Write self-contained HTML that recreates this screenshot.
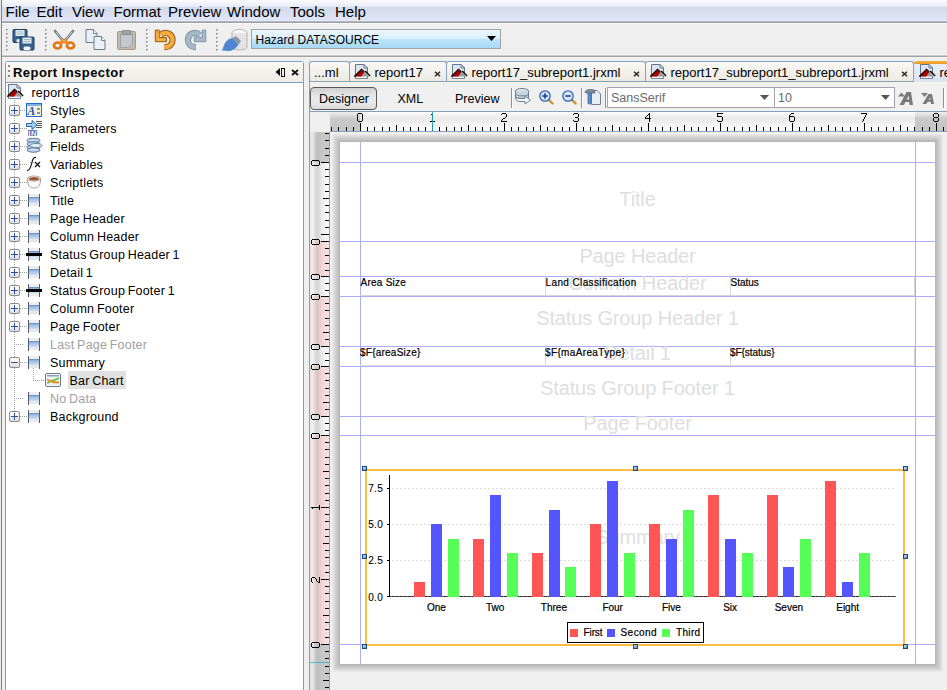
<!DOCTYPE html><html><head><meta charset="utf-8"><style>html,body{margin:0;padding:0;}body{width:947px;height:690px;position:relative;overflow:hidden;background:#efefef;font-family:"Liberation Sans",sans-serif;}</style></head><body><div style="position:absolute;left:0px;top:0px;width:947px;height:21px;background:linear-gradient(#fafbfe 0px,#f1f4fa 3px,#e8ecf7 6.5px,#d4daee 7.5px,#d8deef 12px,#e1e7f7 21px)"></div>
<div style="position:absolute;left:0px;top:21px;width:947px;height:1px;background:#b5bccb"></div>
<div style="position:absolute;left:0px;top:22px;width:947px;height:1px;background:#9d9d9d"></div>
<div style="position:absolute;left:0px;top:23px;width:947px;height:1px;background:#fdfdfd"></div>
<div style="position:absolute;left:0px;top:54px;width:947px;height:1px;background:#f4f4f4"></div>
<div style="position:absolute;left:0px;top:55px;width:947px;height:1px;background:#cacaca"></div>
<div style="position:absolute;left:0px;top:56px;width:947px;height:1px;background:#a2a2a2"></div>
<div style="position:absolute;left:0px;top:57px;width:947px;height:1px;background:#f5f5f5"></div>
<div style="position:absolute;left:1px;top:0px;width:1px;height:690px;background:#828282"></div>
<div style="position:absolute;left:0px;top:0px;width:1px;height:690px;background:#e8e8e8"></div>
<div style="position:absolute;left:5.5px;top:3px;font:normal 15px/17px 'Liberation Sans',sans-serif;color:#000;white-space:nowrap;">File</div>
<div style="position:absolute;left:36.5px;top:3px;font:normal 15px/17px 'Liberation Sans',sans-serif;color:#000;white-space:nowrap;">Edit</div>
<div style="position:absolute;left:72px;top:3px;font:normal 15px/17px 'Liberation Sans',sans-serif;color:#000;white-space:nowrap;">View</div>
<div style="position:absolute;left:113.5px;top:3px;font:normal 15px/17px 'Liberation Sans',sans-serif;color:#000;white-space:nowrap;">Format</div>
<div style="position:absolute;left:168px;top:3px;font:normal 15px/17px 'Liberation Sans',sans-serif;color:#000;white-space:nowrap;">Preview</div>
<div style="position:absolute;left:227px;top:3px;font:normal 15px/17px 'Liberation Sans',sans-serif;color:#000;white-space:nowrap;">Window</div>
<div style="position:absolute;left:290px;top:3px;font:normal 15px/17px 'Liberation Sans',sans-serif;color:#000;white-space:nowrap;">Tools</div>
<div style="position:absolute;left:335px;top:3px;font:normal 15px/17px 'Liberation Sans',sans-serif;color:#000;white-space:nowrap;">Help</div>
<svg style="position:absolute;left:6px;top:29px" width="2" height="24" viewBox="0 0 2 24"><rect x="0" y="0" width="2" height="2" fill="#9a9a9a"/><rect x="1" y="1" width="1" height="1" fill="#fff"/><rect x="0" y="4" width="2" height="2" fill="#9a9a9a"/><rect x="1" y="5" width="1" height="1" fill="#fff"/><rect x="0" y="8" width="2" height="2" fill="#9a9a9a"/><rect x="1" y="9" width="1" height="1" fill="#fff"/><rect x="0" y="12" width="2" height="2" fill="#9a9a9a"/><rect x="1" y="13" width="1" height="1" fill="#fff"/><rect x="0" y="16" width="2" height="2" fill="#9a9a9a"/><rect x="1" y="17" width="1" height="1" fill="#fff"/><rect x="0" y="20" width="2" height="2" fill="#9a9a9a"/><rect x="1" y="21" width="1" height="1" fill="#fff"/></svg>
<svg style="position:absolute;left:45px;top:29px" width="2" height="24" viewBox="0 0 2 24"><rect x="0" y="0" width="2" height="2" fill="#9a9a9a"/><rect x="1" y="1" width="1" height="1" fill="#fff"/><rect x="0" y="4" width="2" height="2" fill="#9a9a9a"/><rect x="1" y="5" width="1" height="1" fill="#fff"/><rect x="0" y="8" width="2" height="2" fill="#9a9a9a"/><rect x="1" y="9" width="1" height="1" fill="#fff"/><rect x="0" y="12" width="2" height="2" fill="#9a9a9a"/><rect x="1" y="13" width="1" height="1" fill="#fff"/><rect x="0" y="16" width="2" height="2" fill="#9a9a9a"/><rect x="1" y="17" width="1" height="1" fill="#fff"/><rect x="0" y="20" width="2" height="2" fill="#9a9a9a"/><rect x="1" y="21" width="1" height="1" fill="#fff"/></svg>
<svg style="position:absolute;left:146px;top:29px" width="2" height="24" viewBox="0 0 2 24"><rect x="0" y="0" width="2" height="2" fill="#9a9a9a"/><rect x="1" y="1" width="1" height="1" fill="#fff"/><rect x="0" y="4" width="2" height="2" fill="#9a9a9a"/><rect x="1" y="5" width="1" height="1" fill="#fff"/><rect x="0" y="8" width="2" height="2" fill="#9a9a9a"/><rect x="1" y="9" width="1" height="1" fill="#fff"/><rect x="0" y="12" width="2" height="2" fill="#9a9a9a"/><rect x="1" y="13" width="1" height="1" fill="#fff"/><rect x="0" y="16" width="2" height="2" fill="#9a9a9a"/><rect x="1" y="17" width="1" height="1" fill="#fff"/><rect x="0" y="20" width="2" height="2" fill="#9a9a9a"/><rect x="1" y="21" width="1" height="1" fill="#fff"/></svg>
<svg style="position:absolute;left:216px;top:29px" width="2" height="24" viewBox="0 0 2 24"><rect x="0" y="0" width="2" height="2" fill="#9a9a9a"/><rect x="1" y="1" width="1" height="1" fill="#fff"/><rect x="0" y="4" width="2" height="2" fill="#9a9a9a"/><rect x="1" y="5" width="1" height="1" fill="#fff"/><rect x="0" y="8" width="2" height="2" fill="#9a9a9a"/><rect x="1" y="9" width="1" height="1" fill="#fff"/><rect x="0" y="12" width="2" height="2" fill="#9a9a9a"/><rect x="1" y="13" width="1" height="1" fill="#fff"/><rect x="0" y="16" width="2" height="2" fill="#9a9a9a"/><rect x="1" y="17" width="1" height="1" fill="#fff"/><rect x="0" y="20" width="2" height="2" fill="#9a9a9a"/><rect x="1" y="21" width="1" height="1" fill="#fff"/></svg>
<svg style="position:absolute;left:12px;top:29px" width="24" height="22" viewBox="0 0 24 22"><g transform="translate(0.5,0)"><path d="M0.5 1.5 Q0.5 0.5 1.5 0.5 H13.5 Q14.5 0.5 14.5 1.5 V12.5 Q14.5 13.5 13.5 13.5 H1.5 Q0.5 13.5 0.5 12.5 Z" fill="#33628f" stroke="#1d3b5c"/><rect x="3" y="1" width="9" height="6" fill="#e2eaf1"/><rect x="4" y="2.5" width="7" height="1" fill="#a9b6c2"/><rect x="4" y="4.5" width="7" height="1" fill="#a9b6c2"/><rect x="4" y="10" width="7" height="3.5" rx="1.5" fill="#f6f8fa"/></g><g transform="translate(7.5,7.5)"><path d="M0.5 1.5 Q0.5 0.5 1.5 0.5 H13.5 Q14.5 0.5 14.5 1.5 V12.5 Q14.5 13.5 13.5 13.5 H1.5 Q0.5 13.5 0.5 12.5 Z" fill="#33628f" stroke="#1d3b5c"/><rect x="3" y="1" width="9" height="6" fill="#e2eaf1"/><rect x="4" y="2.5" width="7" height="1" fill="#a9b6c2"/><rect x="4" y="4.5" width="7" height="1" fill="#a9b6c2"/><rect x="4" y="10" width="7" height="3.5" rx="1.5" fill="#f6f8fa"/></g></svg>
<svg style="position:absolute;left:52px;top:29px" width="24" height="22" viewBox="0 0 24 22"><path d="M3 2 L12 13" stroke="#5f6a74" stroke-width="2.4" stroke-linecap="round"/><path d="M21 2 L12 13" stroke="#5f6a74" stroke-width="2.4" stroke-linecap="round"/><path d="M3.5 2.5 L11.5 12.2 M20.5 2.5 L12.5 12.2" stroke="#e6eaee" stroke-width="0.9"/><ellipse cx="5.5" cy="16.5" rx="3.6" ry="3" fill="none" stroke="#e27512" stroke-width="2.6"/><ellipse cx="18.5" cy="16.5" rx="3.6" ry="3" fill="none" stroke="#e27512" stroke-width="2.6"/><path d="M8 14.5 L12 11 L16 14.5" stroke="#f08a1c" stroke-width="3" fill="none"/><circle cx="12" cy="12" r="1.2" fill="#f6b060"/></svg>
<svg style="position:absolute;left:85px;top:29px" width="22" height="22" viewBox="0 0 22 22"><g transform="translate(0.5,0)"><path d="M0.5 0.5 H8 L11.5 4.5 V13.5 H0.5 Z" fill="#e9f0f7" stroke="#6d7c8c"/><path d="M8 0.5 V4.5 H11.5" fill="#fff" stroke="#6d7c8c"/></g><g transform="translate(8.5,7)"><path d="M0.5 0.5 H8 L11.5 4.5 V13.5 H0.5 Z" fill="#e9f0f7" stroke="#6d7c8c"/><path d="M8 0.5 V4.5 H11.5" fill="#fff" stroke="#6d7c8c"/></g></svg>
<svg style="position:absolute;left:116px;top:29px" width="21" height="22" viewBox="0 0 21 22"><rect x="1.5" y="2.5" width="18" height="18" rx="1" fill="#c3bba9" stroke="#a39a86"/><path d="M4.5 5.5 H16.5 V15 L13 18.5 H4.5 Z" fill="#c4c7cb" stroke="#9da2a8"/><rect x="6" y="1.5" width="9" height="4" rx="1" fill="#9ea2a6" stroke="#8a8e92"/></svg>
<svg style="position:absolute;left:154px;top:29px" width="24" height="22" viewBox="0 0 24 22"><path d="M10.5 18.1 L11.5 18.1 A7.1 7.1 0 0 0 18.6 11 A7.1 7.1 0 0 0 6.5 6" fill="none" stroke="#9a5a12" stroke-width="6.2"/><path d="M1.3 1.1 H5.2 V8.5 H12.5 V12.7 H1.3 Z" fill="#f2a43a" stroke="#9a5a12" stroke-width="1" stroke-linejoin="round"/><path d="M10.5 18.1 L11.5 18.1 A7.1 7.1 0 0 0 18.6 11 A7.1 7.1 0 0 0 6.5 6" fill="none" stroke="#f5ab40" stroke-width="4.2"/><path d="M2 2 H4.5 V9.3 H12 V12 H2 Z" fill="#f5ab40"/></svg>
<svg style="position:absolute;left:183px;top:29px" width="24" height="22" viewBox="0 0 24 22"><path d="M13 18.1 L12 18.1 A7.1 7.1 0 0 1 4.9 11 A7.1 7.1 0 0 1 17 6" fill="none" stroke="#7f93a4" stroke-width="6.2"/><path d="M19.4 1.1 H22.8 V12.7 H11.4 V8.1 H19.4 Z" fill="#a6b8c8" stroke="#7f93a4" stroke-width="1" stroke-linejoin="round"/><path d="M13 18.1 L12 18.1 A7.1 7.1 0 0 1 4.9 11 A7.1 7.1 0 0 1 17 6" fill="none" stroke="#a6b8c8" stroke-width="4.2"/><path d="M20 1.8 H22.1 V12 H12.1 V8.8 H20 Z" fill="#a6b8c8"/></svg>
<svg style="position:absolute;left:221px;top:28px" width="28" height="24" viewBox="0 0 28 24"><ellipse cx="18.5" cy="5" rx="7.5" ry="3.5" fill="#fafafa" stroke="#b4b4b4"/><path d="M11 5 V19 C11 23, 26 23, 26 19 V5" fill="#e4e4e4" stroke="#b4b4b4"/><path d="M1 22.5 L4 15 Q7 10.5 11.5 10 L17.5 16.5 Q14.5 21.5 9 23 Z" fill="#4f86d0"/><path d="M11.5 10 L15 8 L20 13 L17.5 16.5 Z" fill="#8a96a0"/></svg>
<div style="position:absolute;left:251px;top:29px;width:250px;height:20px;box-sizing:border-box;border:1px solid #a3a3a3;background:linear-gradient(#ebf6fd,#d9f0fc 50%,#bde5fc 50%,#a8d9f5)"></div>
<div style="position:absolute;left:255.5px;top:33px;font:normal 12px/14px 'Liberation Sans',sans-serif;color:#000;white-space:nowrap;">Hazard DATASOURCE</div>
<svg style="position:absolute;left:487px;top:36px" width="10" height="6" viewBox="0 0 10 6"><path d="M0 0 H9 L4.5 5 Z" fill="#000"/></svg>
<div style="position:absolute;left:5px;top:61px;width:299px;height:629px;box-sizing:border-box;border:1px solid #83a1bc;border-bottom:none;border-radius:3px 3px 0 0;background:#fff"></div>
<div style="position:absolute;left:6px;top:62px;width:297px;height:20px;background:linear-gradient(#faf9f5,#edebe4)"></div>
<div style="position:absolute;left:6px;top:82px;width:297px;height:1px;background:#83a1bc"></div>
<svg style="position:absolute;left:8px;top:65px" width="3" height="13" viewBox="0 0 3 13"><rect x="0" y="0" width="2" height="2" fill="#8a8a8a"/><rect x="0" y="5" width="2" height="2" fill="#8a8a8a"/><rect x="0" y="10" width="2" height="2" fill="#8a8a8a"/></svg>
<div style="position:absolute;left:13px;top:65px;font:bold 13px/15px 'Liberation Sans',sans-serif;color:#000;white-space:nowrap;letter-spacing:0.45px">Report Inspector</div>
<svg style="position:absolute;left:275px;top:67px" width="10" height="10" viewBox="0 0 10 10"><path d="M5 1 V9 L0.5 5 Z" fill="#111"/><rect x="6.5" y="1.5" width="3" height="8" fill="none" stroke="#111"/></svg>
<svg style="position:absolute;left:291px;top:69px" width="8" height="7" viewBox="0 0 8 7"><path d="M1 1 L7 6 M7 1 L1 6" stroke="#111" stroke-width="1.8"/></svg>
<svg style="position:absolute;left:7px;top:84px" width="17" height="16" viewBox="0 0 17 16"><path d="M1.5 0.5 H10 L13.5 4 V14.5 H1.5 Z" fill="#dbe6f1" stroke="#66778a"/><path d="M10 0.5 L13.5 4 H10 Z" fill="#f7f9fb" stroke="#66778a" stroke-linejoin="miter"/><rect x="2" y="12.6" width="11" height="1.5" fill="#fff"/><path d="M0.2 12.6 L7.5 5.2 L10.3 8 L11.5 7 L16.3 12 L16 12.6 Z" fill="#9c9c9c"/><path d="M0.2 12.6 L7.5 5.2 L10.3 8 L7.2 12.6 Z" fill="#a80000"/><path d="M0.3 12.5 L7.5 5.2 L10.3 8 M11.3 7 L16.2 11.9" fill="none" stroke="#000" stroke-width="1.1"/></svg>
<div style="position:absolute;left:31.5px;top:86px;font:normal 12.5px/14px 'Liberation Sans',sans-serif;color:#000;white-space:nowrap;letter-spacing:0.2px">report18</div>
<svg style="position:absolute;left:14px;top:100px" width="1" height="316" viewBox="0 0 1 316"><rect x="0" y="0" width="1" height="1" fill="#a0a0a0"/><rect x="0" y="2" width="1" height="1" fill="#a0a0a0"/><rect x="0" y="4" width="1" height="1" fill="#a0a0a0"/><rect x="0" y="6" width="1" height="1" fill="#a0a0a0"/><rect x="0" y="8" width="1" height="1" fill="#a0a0a0"/><rect x="0" y="10" width="1" height="1" fill="#a0a0a0"/><rect x="0" y="12" width="1" height="1" fill="#a0a0a0"/><rect x="0" y="14" width="1" height="1" fill="#a0a0a0"/><rect x="0" y="16" width="1" height="1" fill="#a0a0a0"/><rect x="0" y="18" width="1" height="1" fill="#a0a0a0"/><rect x="0" y="20" width="1" height="1" fill="#a0a0a0"/><rect x="0" y="22" width="1" height="1" fill="#a0a0a0"/><rect x="0" y="24" width="1" height="1" fill="#a0a0a0"/><rect x="0" y="26" width="1" height="1" fill="#a0a0a0"/><rect x="0" y="28" width="1" height="1" fill="#a0a0a0"/><rect x="0" y="30" width="1" height="1" fill="#a0a0a0"/><rect x="0" y="32" width="1" height="1" fill="#a0a0a0"/><rect x="0" y="34" width="1" height="1" fill="#a0a0a0"/><rect x="0" y="36" width="1" height="1" fill="#a0a0a0"/><rect x="0" y="38" width="1" height="1" fill="#a0a0a0"/><rect x="0" y="40" width="1" height="1" fill="#a0a0a0"/><rect x="0" y="42" width="1" height="1" fill="#a0a0a0"/><rect x="0" y="44" width="1" height="1" fill="#a0a0a0"/><rect x="0" y="46" width="1" height="1" fill="#a0a0a0"/><rect x="0" y="48" width="1" height="1" fill="#a0a0a0"/><rect x="0" y="50" width="1" height="1" fill="#a0a0a0"/><rect x="0" y="52" width="1" height="1" fill="#a0a0a0"/><rect x="0" y="54" width="1" height="1" fill="#a0a0a0"/><rect x="0" y="56" width="1" height="1" fill="#a0a0a0"/><rect x="0" y="58" width="1" height="1" fill="#a0a0a0"/><rect x="0" y="60" width="1" height="1" fill="#a0a0a0"/><rect x="0" y="62" width="1" height="1" fill="#a0a0a0"/><rect x="0" y="64" width="1" height="1" fill="#a0a0a0"/><rect x="0" y="66" width="1" height="1" fill="#a0a0a0"/><rect x="0" y="68" width="1" height="1" fill="#a0a0a0"/><rect x="0" y="70" width="1" height="1" fill="#a0a0a0"/><rect x="0" y="72" width="1" height="1" fill="#a0a0a0"/><rect x="0" y="74" width="1" height="1" fill="#a0a0a0"/><rect x="0" y="76" width="1" height="1" fill="#a0a0a0"/><rect x="0" y="78" width="1" height="1" fill="#a0a0a0"/><rect x="0" y="80" width="1" height="1" fill="#a0a0a0"/><rect x="0" y="82" width="1" height="1" fill="#a0a0a0"/><rect x="0" y="84" width="1" height="1" fill="#a0a0a0"/><rect x="0" y="86" width="1" height="1" fill="#a0a0a0"/><rect x="0" y="88" width="1" height="1" fill="#a0a0a0"/><rect x="0" y="90" width="1" height="1" fill="#a0a0a0"/><rect x="0" y="92" width="1" height="1" fill="#a0a0a0"/><rect x="0" y="94" width="1" height="1" fill="#a0a0a0"/><rect x="0" y="96" width="1" height="1" fill="#a0a0a0"/><rect x="0" y="98" width="1" height="1" fill="#a0a0a0"/><rect x="0" y="100" width="1" height="1" fill="#a0a0a0"/><rect x="0" y="102" width="1" height="1" fill="#a0a0a0"/><rect x="0" y="104" width="1" height="1" fill="#a0a0a0"/><rect x="0" y="106" width="1" height="1" fill="#a0a0a0"/><rect x="0" y="108" width="1" height="1" fill="#a0a0a0"/><rect x="0" y="110" width="1" height="1" fill="#a0a0a0"/><rect x="0" y="112" width="1" height="1" fill="#a0a0a0"/><rect x="0" y="114" width="1" height="1" fill="#a0a0a0"/><rect x="0" y="116" width="1" height="1" fill="#a0a0a0"/><rect x="0" y="118" width="1" height="1" fill="#a0a0a0"/><rect x="0" y="120" width="1" height="1" fill="#a0a0a0"/><rect x="0" y="122" width="1" height="1" fill="#a0a0a0"/><rect x="0" y="124" width="1" height="1" fill="#a0a0a0"/><rect x="0" y="126" width="1" height="1" fill="#a0a0a0"/><rect x="0" y="128" width="1" height="1" fill="#a0a0a0"/><rect x="0" y="130" width="1" height="1" fill="#a0a0a0"/><rect x="0" y="132" width="1" height="1" fill="#a0a0a0"/><rect x="0" y="134" width="1" height="1" fill="#a0a0a0"/><rect x="0" y="136" width="1" height="1" fill="#a0a0a0"/><rect x="0" y="138" width="1" height="1" fill="#a0a0a0"/><rect x="0" y="140" width="1" height="1" fill="#a0a0a0"/><rect x="0" y="142" width="1" height="1" fill="#a0a0a0"/><rect x="0" y="144" width="1" height="1" fill="#a0a0a0"/><rect x="0" y="146" width="1" height="1" fill="#a0a0a0"/><rect x="0" y="148" width="1" height="1" fill="#a0a0a0"/><rect x="0" y="150" width="1" height="1" fill="#a0a0a0"/><rect x="0" y="152" width="1" height="1" fill="#a0a0a0"/><rect x="0" y="154" width="1" height="1" fill="#a0a0a0"/><rect x="0" y="156" width="1" height="1" fill="#a0a0a0"/><rect x="0" y="158" width="1" height="1" fill="#a0a0a0"/><rect x="0" y="160" width="1" height="1" fill="#a0a0a0"/><rect x="0" y="162" width="1" height="1" fill="#a0a0a0"/><rect x="0" y="164" width="1" height="1" fill="#a0a0a0"/><rect x="0" y="166" width="1" height="1" fill="#a0a0a0"/><rect x="0" y="168" width="1" height="1" fill="#a0a0a0"/><rect x="0" y="170" width="1" height="1" fill="#a0a0a0"/><rect x="0" y="172" width="1" height="1" fill="#a0a0a0"/><rect x="0" y="174" width="1" height="1" fill="#a0a0a0"/><rect x="0" y="176" width="1" height="1" fill="#a0a0a0"/><rect x="0" y="178" width="1" height="1" fill="#a0a0a0"/><rect x="0" y="180" width="1" height="1" fill="#a0a0a0"/><rect x="0" y="182" width="1" height="1" fill="#a0a0a0"/><rect x="0" y="184" width="1" height="1" fill="#a0a0a0"/><rect x="0" y="186" width="1" height="1" fill="#a0a0a0"/><rect x="0" y="188" width="1" height="1" fill="#a0a0a0"/><rect x="0" y="190" width="1" height="1" fill="#a0a0a0"/><rect x="0" y="192" width="1" height="1" fill="#a0a0a0"/><rect x="0" y="194" width="1" height="1" fill="#a0a0a0"/><rect x="0" y="196" width="1" height="1" fill="#a0a0a0"/><rect x="0" y="198" width="1" height="1" fill="#a0a0a0"/><rect x="0" y="200" width="1" height="1" fill="#a0a0a0"/><rect x="0" y="202" width="1" height="1" fill="#a0a0a0"/><rect x="0" y="204" width="1" height="1" fill="#a0a0a0"/><rect x="0" y="206" width="1" height="1" fill="#a0a0a0"/><rect x="0" y="208" width="1" height="1" fill="#a0a0a0"/><rect x="0" y="210" width="1" height="1" fill="#a0a0a0"/><rect x="0" y="212" width="1" height="1" fill="#a0a0a0"/><rect x="0" y="214" width="1" height="1" fill="#a0a0a0"/><rect x="0" y="216" width="1" height="1" fill="#a0a0a0"/><rect x="0" y="218" width="1" height="1" fill="#a0a0a0"/><rect x="0" y="220" width="1" height="1" fill="#a0a0a0"/><rect x="0" y="222" width="1" height="1" fill="#a0a0a0"/><rect x="0" y="224" width="1" height="1" fill="#a0a0a0"/><rect x="0" y="226" width="1" height="1" fill="#a0a0a0"/><rect x="0" y="228" width="1" height="1" fill="#a0a0a0"/><rect x="0" y="230" width="1" height="1" fill="#a0a0a0"/><rect x="0" y="232" width="1" height="1" fill="#a0a0a0"/><rect x="0" y="234" width="1" height="1" fill="#a0a0a0"/><rect x="0" y="236" width="1" height="1" fill="#a0a0a0"/><rect x="0" y="238" width="1" height="1" fill="#a0a0a0"/><rect x="0" y="240" width="1" height="1" fill="#a0a0a0"/><rect x="0" y="242" width="1" height="1" fill="#a0a0a0"/><rect x="0" y="244" width="1" height="1" fill="#a0a0a0"/><rect x="0" y="246" width="1" height="1" fill="#a0a0a0"/><rect x="0" y="248" width="1" height="1" fill="#a0a0a0"/><rect x="0" y="250" width="1" height="1" fill="#a0a0a0"/><rect x="0" y="252" width="1" height="1" fill="#a0a0a0"/><rect x="0" y="254" width="1" height="1" fill="#a0a0a0"/><rect x="0" y="256" width="1" height="1" fill="#a0a0a0"/><rect x="0" y="258" width="1" height="1" fill="#a0a0a0"/><rect x="0" y="260" width="1" height="1" fill="#a0a0a0"/><rect x="0" y="262" width="1" height="1" fill="#a0a0a0"/><rect x="0" y="264" width="1" height="1" fill="#a0a0a0"/><rect x="0" y="266" width="1" height="1" fill="#a0a0a0"/><rect x="0" y="268" width="1" height="1" fill="#a0a0a0"/><rect x="0" y="270" width="1" height="1" fill="#a0a0a0"/><rect x="0" y="272" width="1" height="1" fill="#a0a0a0"/><rect x="0" y="274" width="1" height="1" fill="#a0a0a0"/><rect x="0" y="276" width="1" height="1" fill="#a0a0a0"/><rect x="0" y="278" width="1" height="1" fill="#a0a0a0"/><rect x="0" y="280" width="1" height="1" fill="#a0a0a0"/><rect x="0" y="282" width="1" height="1" fill="#a0a0a0"/><rect x="0" y="284" width="1" height="1" fill="#a0a0a0"/><rect x="0" y="286" width="1" height="1" fill="#a0a0a0"/><rect x="0" y="288" width="1" height="1" fill="#a0a0a0"/><rect x="0" y="290" width="1" height="1" fill="#a0a0a0"/><rect x="0" y="292" width="1" height="1" fill="#a0a0a0"/><rect x="0" y="294" width="1" height="1" fill="#a0a0a0"/><rect x="0" y="296" width="1" height="1" fill="#a0a0a0"/><rect x="0" y="298" width="1" height="1" fill="#a0a0a0"/><rect x="0" y="300" width="1" height="1" fill="#a0a0a0"/><rect x="0" y="302" width="1" height="1" fill="#a0a0a0"/><rect x="0" y="304" width="1" height="1" fill="#a0a0a0"/><rect x="0" y="306" width="1" height="1" fill="#a0a0a0"/><rect x="0" y="308" width="1" height="1" fill="#a0a0a0"/><rect x="0" y="310" width="1" height="1" fill="#a0a0a0"/><rect x="0" y="312" width="1" height="1" fill="#a0a0a0"/><rect x="0" y="314" width="1" height="1" fill="#a0a0a0"/></svg>
<svg style="position:absolute;left:20px;top:110px" width="8" height="1" viewBox="0 0 8 1"><rect x="0" y="0" width="1" height="1" fill="#a0a0a0"/><rect x="2" y="0" width="1" height="1" fill="#a0a0a0"/><rect x="4" y="0" width="1" height="1" fill="#a0a0a0"/><rect x="6" y="0" width="1" height="1" fill="#a0a0a0"/></svg>
<svg style="position:absolute;left:9px;top:105px" width="11" height="11" viewBox="0 0 11 11"><defs><linearGradient id="pb" x1="0" y1="0" x2="0" y2="1"><stop offset="0" stop-color="#fff"/><stop offset="0.5" stop-color="#f4f4f4"/><stop offset="1" stop-color="#d8d8d8"/></linearGradient></defs><rect x="0.5" y="0.5" width="10" height="10" rx="1.5" fill="url(#pb)" stroke="#8e8e8e"/><rect x="2" y="5" width="7" height="1" fill="#2d4f9e"/><rect x="5" y="2" width="1" height="7" fill="#2d4f9e"/></svg>
<svg style="position:absolute;left:26px;top:103px" width="16" height="14" viewBox="0 0 16 14"><rect x="0.5" y="0.5" width="15" height="13" fill="#fbf2d2" stroke="#1f6fd8"/><rect x="1" y="1" width="14" height="2" fill="#7fb2ea"/><text x="1.5" y="12" font-family="Liberation Serif" font-style="italic" font-weight="bold" font-size="11.5" fill="#1b4fb4">A</text><rect x="11" y="5" width="3" height="2" fill="#5f98dc"/><rect x="11" y="9" width="3" height="2" fill="#5f98dc"/></svg>
<div style="position:absolute;left:50px;top:104px;font:normal 12.5px/14px 'Liberation Sans',sans-serif;color:#000;white-space:nowrap;letter-spacing:0.2px;word-spacing:-1px">Styles</div>
<svg style="position:absolute;left:20px;top:128px" width="8" height="1" viewBox="0 0 8 1"><rect x="0" y="0" width="1" height="1" fill="#a0a0a0"/><rect x="2" y="0" width="1" height="1" fill="#a0a0a0"/><rect x="4" y="0" width="1" height="1" fill="#a0a0a0"/><rect x="6" y="0" width="1" height="1" fill="#a0a0a0"/></svg>
<svg style="position:absolute;left:9px;top:123px" width="11" height="11" viewBox="0 0 11 11"><defs><linearGradient id="pb" x1="0" y1="0" x2="0" y2="1"><stop offset="0" stop-color="#fff"/><stop offset="0.5" stop-color="#f4f4f4"/><stop offset="1" stop-color="#d8d8d8"/></linearGradient></defs><rect x="0.5" y="0.5" width="10" height="10" rx="1.5" fill="url(#pb)" stroke="#8e8e8e"/><rect x="2" y="5" width="7" height="1" fill="#2d4f9e"/><rect x="5" y="2" width="1" height="7" fill="#2d4f9e"/></svg>
<svg style="position:absolute;left:26px;top:120px" width="16" height="16" viewBox="0 0 16 16"><path d="M0.5 3.5 H6 V0.5 L11 5 L6 9.5 V6.5 H0.5 Z" fill="#a8d4f4" stroke="#2a6aa0"/><rect x="10" y="1" width="6" height="1" fill="#555"/><rect x="11" y="3" width="5" height="1" fill="#555"/><rect x="11" y="5" width="5" height="1" fill="#555"/><rect x="10" y="7" width="6" height="1" fill="#555"/><text x="2.5" y="15.5" font-family="Liberation Sans" font-weight="bold" font-size="7.5" fill="#fff" stroke="#1a5a9a" stroke-width="1.6" paint-order="stroke" letter-spacing="0.3">IN</text></svg>
<div style="position:absolute;left:50px;top:122px;font:normal 12.5px/14px 'Liberation Sans',sans-serif;color:#000;white-space:nowrap;letter-spacing:0.2px;word-spacing:-1px">Parameters</div>
<svg style="position:absolute;left:20px;top:146px" width="8" height="1" viewBox="0 0 8 1"><rect x="0" y="0" width="1" height="1" fill="#a0a0a0"/><rect x="2" y="0" width="1" height="1" fill="#a0a0a0"/><rect x="4" y="0" width="1" height="1" fill="#a0a0a0"/><rect x="6" y="0" width="1" height="1" fill="#a0a0a0"/></svg>
<svg style="position:absolute;left:9px;top:141px" width="11" height="11" viewBox="0 0 11 11"><defs><linearGradient id="pb" x1="0" y1="0" x2="0" y2="1"><stop offset="0" stop-color="#fff"/><stop offset="0.5" stop-color="#f4f4f4"/><stop offset="1" stop-color="#d8d8d8"/></linearGradient></defs><rect x="0.5" y="0.5" width="10" height="10" rx="1.5" fill="url(#pb)" stroke="#8e8e8e"/><rect x="2" y="5" width="7" height="1" fill="#2d4f9e"/><rect x="5" y="2" width="1" height="7" fill="#2d4f9e"/></svg>
<svg style="position:absolute;left:26px;top:138px" width="17" height="15" viewBox="0 0 17 15"><ellipse cx="7.5" cy="2.5" rx="6.5" ry="2.2" fill="#c7d8e8" stroke="#4e7498" stroke-width="1"/><ellipse cx="7.5" cy="6" rx="6.5" ry="2.2" fill="#c7d8e8" stroke="#4e7498" stroke-width="1"/><ellipse cx="7.5" cy="9.5" rx="6.5" ry="2.2" fill="#c7d8e8" stroke="#4e7498" stroke-width="1"/><ellipse cx="7.5" cy="12" rx="6.5" ry="2.2" fill="#c7d8e8" stroke="#4e7498" stroke-width="1"/><ellipse cx="10" cy="7.5" rx="6" ry="2" fill="#e6eef6" stroke="#4e7498" stroke-width="0.8"/></svg>
<div style="position:absolute;left:50px;top:140px;font:normal 12.5px/14px 'Liberation Sans',sans-serif;color:#000;white-space:nowrap;letter-spacing:0.2px;word-spacing:-1px">Fields</div>
<svg style="position:absolute;left:20px;top:164px" width="8" height="1" viewBox="0 0 8 1"><rect x="0" y="0" width="1" height="1" fill="#a0a0a0"/><rect x="2" y="0" width="1" height="1" fill="#a0a0a0"/><rect x="4" y="0" width="1" height="1" fill="#a0a0a0"/><rect x="6" y="0" width="1" height="1" fill="#a0a0a0"/></svg>
<svg style="position:absolute;left:9px;top:159px" width="11" height="11" viewBox="0 0 11 11"><defs><linearGradient id="pb" x1="0" y1="0" x2="0" y2="1"><stop offset="0" stop-color="#fff"/><stop offset="0.5" stop-color="#f4f4f4"/><stop offset="1" stop-color="#d8d8d8"/></linearGradient></defs><rect x="0.5" y="0.5" width="10" height="10" rx="1.5" fill="url(#pb)" stroke="#8e8e8e"/><rect x="2" y="5" width="7" height="1" fill="#2d4f9e"/><rect x="5" y="2" width="1" height="7" fill="#2d4f9e"/></svg>
<svg style="position:absolute;left:26px;top:156px" width="16" height="16" viewBox="0 0 16 16"><path d="M1 14.5 C4 15, 5 10, 6 6 C7 2, 8 1, 10 1.5" fill="none" stroke="#111" stroke-width="1.1"/><path d="M4 6.5 H8" stroke="#777" stroke-width="0.8"/><path d="M9 6 L14 11 M14 6 L9 11" stroke="#111" stroke-width="1.2"/></svg>
<div style="position:absolute;left:50px;top:158px;font:normal 12.5px/14px 'Liberation Sans',sans-serif;color:#000;white-space:nowrap;letter-spacing:0.2px;word-spacing:-1px">Variables</div>
<svg style="position:absolute;left:20px;top:182px" width="8" height="1" viewBox="0 0 8 1"><rect x="0" y="0" width="1" height="1" fill="#a0a0a0"/><rect x="2" y="0" width="1" height="1" fill="#a0a0a0"/><rect x="4" y="0" width="1" height="1" fill="#a0a0a0"/><rect x="6" y="0" width="1" height="1" fill="#a0a0a0"/></svg>
<svg style="position:absolute;left:9px;top:177px" width="11" height="11" viewBox="0 0 11 11"><defs><linearGradient id="pb" x1="0" y1="0" x2="0" y2="1"><stop offset="0" stop-color="#fff"/><stop offset="0.5" stop-color="#f4f4f4"/><stop offset="1" stop-color="#d8d8d8"/></linearGradient></defs><rect x="0.5" y="0.5" width="10" height="10" rx="1.5" fill="url(#pb)" stroke="#8e8e8e"/><rect x="2" y="5" width="7" height="1" fill="#2d4f9e"/><rect x="5" y="2" width="1" height="7" fill="#2d4f9e"/></svg>
<svg style="position:absolute;left:26px;top:175px" width="17" height="14" viewBox="0 0 17 14"><path d="M1.5 3 C1.5 12, 4 13, 8 13 C12 13, 14.5 12, 14.5 3 Z" fill="#fafafa" stroke="#a0a0a0"/><ellipse cx="8" cy="3.5" rx="6.5" ry="2.5" fill="#fff" stroke="#a0a0a0"/><ellipse cx="8" cy="3.8" rx="5" ry="1.7" fill="#a0532c"/></svg>
<div style="position:absolute;left:50px;top:176px;font:normal 12.5px/14px 'Liberation Sans',sans-serif;color:#000;white-space:nowrap;letter-spacing:0.2px;word-spacing:-1px">Scriptlets</div>
<svg style="position:absolute;left:20px;top:200px" width="8" height="1" viewBox="0 0 8 1"><rect x="0" y="0" width="1" height="1" fill="#a0a0a0"/><rect x="2" y="0" width="1" height="1" fill="#a0a0a0"/><rect x="4" y="0" width="1" height="1" fill="#a0a0a0"/><rect x="6" y="0" width="1" height="1" fill="#a0a0a0"/></svg>
<svg style="position:absolute;left:9px;top:195px" width="11" height="11" viewBox="0 0 11 11"><defs><linearGradient id="pb" x1="0" y1="0" x2="0" y2="1"><stop offset="0" stop-color="#fff"/><stop offset="0.5" stop-color="#f4f4f4"/><stop offset="1" stop-color="#d8d8d8"/></linearGradient></defs><rect x="0.5" y="0.5" width="10" height="10" rx="1.5" fill="url(#pb)" stroke="#8e8e8e"/><rect x="2" y="5" width="7" height="1" fill="#2d4f9e"/><rect x="5" y="2" width="1" height="7" fill="#2d4f9e"/></svg>
<svg style="position:absolute;left:28px;top:194px" width="12" height="13" viewBox="0 0 12 13"><defs><linearGradient id="bg" x1="0" y1="0" x2="0" y2="1"><stop offset="0" stop-color="#8db2de"/><stop offset="1" stop-color="#cfe0f3"/></linearGradient></defs><rect x="1" y="0" width="10" height="3" fill="#eeeeee"/><rect x="1" y="3" width="10" height="1" fill="#6f94c8"/><rect x="1" y="4" width="10" height="5" fill="url(#bg)"/><rect x="1" y="9" width="10" height="3" fill="#e8e8e8"/><rect x="0" y="0" width="1" height="13" fill="#4e5e70"/><rect x="11" y="0" width="1" height="13" fill="#4e5e70"/></svg>
<div style="position:absolute;left:50px;top:194px;font:normal 12.5px/14px 'Liberation Sans',sans-serif;color:#000;white-space:nowrap;letter-spacing:0.2px;word-spacing:-1px">Title</div>
<svg style="position:absolute;left:20px;top:218px" width="8" height="1" viewBox="0 0 8 1"><rect x="0" y="0" width="1" height="1" fill="#a0a0a0"/><rect x="2" y="0" width="1" height="1" fill="#a0a0a0"/><rect x="4" y="0" width="1" height="1" fill="#a0a0a0"/><rect x="6" y="0" width="1" height="1" fill="#a0a0a0"/></svg>
<svg style="position:absolute;left:9px;top:213px" width="11" height="11" viewBox="0 0 11 11"><defs><linearGradient id="pb" x1="0" y1="0" x2="0" y2="1"><stop offset="0" stop-color="#fff"/><stop offset="0.5" stop-color="#f4f4f4"/><stop offset="1" stop-color="#d8d8d8"/></linearGradient></defs><rect x="0.5" y="0.5" width="10" height="10" rx="1.5" fill="url(#pb)" stroke="#8e8e8e"/><rect x="2" y="5" width="7" height="1" fill="#2d4f9e"/><rect x="5" y="2" width="1" height="7" fill="#2d4f9e"/></svg>
<svg style="position:absolute;left:28px;top:212px" width="12" height="13" viewBox="0 0 12 13"><defs><linearGradient id="bg" x1="0" y1="0" x2="0" y2="1"><stop offset="0" stop-color="#8db2de"/><stop offset="1" stop-color="#cfe0f3"/></linearGradient></defs><rect x="1" y="0" width="10" height="3" fill="#eeeeee"/><rect x="1" y="3" width="10" height="1" fill="#6f94c8"/><rect x="1" y="4" width="10" height="5" fill="url(#bg)"/><rect x="1" y="9" width="10" height="3" fill="#e8e8e8"/><rect x="0" y="0" width="1" height="13" fill="#4e5e70"/><rect x="11" y="0" width="1" height="13" fill="#4e5e70"/></svg>
<div style="position:absolute;left:50px;top:212px;font:normal 12.5px/14px 'Liberation Sans',sans-serif;color:#000;white-space:nowrap;letter-spacing:0.2px;word-spacing:-1px">Page Header</div>
<svg style="position:absolute;left:20px;top:236px" width="8" height="1" viewBox="0 0 8 1"><rect x="0" y="0" width="1" height="1" fill="#a0a0a0"/><rect x="2" y="0" width="1" height="1" fill="#a0a0a0"/><rect x="4" y="0" width="1" height="1" fill="#a0a0a0"/><rect x="6" y="0" width="1" height="1" fill="#a0a0a0"/></svg>
<svg style="position:absolute;left:9px;top:231px" width="11" height="11" viewBox="0 0 11 11"><defs><linearGradient id="pb" x1="0" y1="0" x2="0" y2="1"><stop offset="0" stop-color="#fff"/><stop offset="0.5" stop-color="#f4f4f4"/><stop offset="1" stop-color="#d8d8d8"/></linearGradient></defs><rect x="0.5" y="0.5" width="10" height="10" rx="1.5" fill="url(#pb)" stroke="#8e8e8e"/><rect x="2" y="5" width="7" height="1" fill="#2d4f9e"/><rect x="5" y="2" width="1" height="7" fill="#2d4f9e"/></svg>
<svg style="position:absolute;left:28px;top:230px" width="12" height="13" viewBox="0 0 12 13"><defs><linearGradient id="bg" x1="0" y1="0" x2="0" y2="1"><stop offset="0" stop-color="#8db2de"/><stop offset="1" stop-color="#cfe0f3"/></linearGradient></defs><rect x="1" y="0" width="10" height="3" fill="#eeeeee"/><rect x="1" y="3" width="10" height="1" fill="#6f94c8"/><rect x="1" y="4" width="10" height="5" fill="url(#bg)"/><rect x="1" y="9" width="10" height="3" fill="#e8e8e8"/><rect x="0" y="0" width="1" height="13" fill="#4e5e70"/><rect x="11" y="0" width="1" height="13" fill="#4e5e70"/></svg>
<div style="position:absolute;left:50px;top:230px;font:normal 12.5px/14px 'Liberation Sans',sans-serif;color:#000;white-space:nowrap;letter-spacing:0.2px;word-spacing:-1px">Column Header</div>
<svg style="position:absolute;left:20px;top:254px" width="8" height="1" viewBox="0 0 8 1"><rect x="0" y="0" width="1" height="1" fill="#a0a0a0"/><rect x="2" y="0" width="1" height="1" fill="#a0a0a0"/><rect x="4" y="0" width="1" height="1" fill="#a0a0a0"/><rect x="6" y="0" width="1" height="1" fill="#a0a0a0"/></svg>
<svg style="position:absolute;left:9px;top:249px" width="11" height="11" viewBox="0 0 11 11"><defs><linearGradient id="pb" x1="0" y1="0" x2="0" y2="1"><stop offset="0" stop-color="#fff"/><stop offset="0.5" stop-color="#f4f4f4"/><stop offset="1" stop-color="#d8d8d8"/></linearGradient></defs><rect x="0.5" y="0.5" width="10" height="10" rx="1.5" fill="url(#pb)" stroke="#8e8e8e"/><rect x="2" y="5" width="7" height="1" fill="#2d4f9e"/><rect x="5" y="2" width="1" height="7" fill="#2d4f9e"/></svg>
<svg style="position:absolute;left:26px;top:248px" width="16" height="13" viewBox="0 0 16 13"><defs><linearGradient id="bg" x1="0" y1="0" x2="0" y2="1"><stop offset="0" stop-color="#8db2de"/><stop offset="1" stop-color="#cfe0f3"/></linearGradient></defs><g transform="translate(2,0)"><rect x="1" y="0" width="10" height="3" fill="#eeeeee"/><rect x="1" y="3" width="10" height="1" fill="#6f94c8"/><rect x="1" y="4" width="10" height="5" fill="url(#bg)"/><rect x="1" y="9" width="10" height="3" fill="#e8e8e8"/><rect x="0" y="0" width="1" height="13" fill="#4e5e70"/><rect x="11" y="0" width="1" height="13" fill="#4e5e70"/><rect x="-2" y="5" width="16" height="3" fill="#000"/></g></svg>
<div style="position:absolute;left:50px;top:248px;font:normal 12.5px/14px 'Liberation Sans',sans-serif;color:#000;white-space:nowrap;letter-spacing:0.2px;word-spacing:-1px">Status Group Header 1</div>
<svg style="position:absolute;left:20px;top:272px" width="8" height="1" viewBox="0 0 8 1"><rect x="0" y="0" width="1" height="1" fill="#a0a0a0"/><rect x="2" y="0" width="1" height="1" fill="#a0a0a0"/><rect x="4" y="0" width="1" height="1" fill="#a0a0a0"/><rect x="6" y="0" width="1" height="1" fill="#a0a0a0"/></svg>
<svg style="position:absolute;left:9px;top:267px" width="11" height="11" viewBox="0 0 11 11"><defs><linearGradient id="pb" x1="0" y1="0" x2="0" y2="1"><stop offset="0" stop-color="#fff"/><stop offset="0.5" stop-color="#f4f4f4"/><stop offset="1" stop-color="#d8d8d8"/></linearGradient></defs><rect x="0.5" y="0.5" width="10" height="10" rx="1.5" fill="url(#pb)" stroke="#8e8e8e"/><rect x="2" y="5" width="7" height="1" fill="#2d4f9e"/><rect x="5" y="2" width="1" height="7" fill="#2d4f9e"/></svg>
<svg style="position:absolute;left:28px;top:266px" width="12" height="13" viewBox="0 0 12 13"><defs><linearGradient id="bg" x1="0" y1="0" x2="0" y2="1"><stop offset="0" stop-color="#8db2de"/><stop offset="1" stop-color="#cfe0f3"/></linearGradient></defs><rect x="1" y="0" width="10" height="3" fill="#eeeeee"/><rect x="1" y="3" width="10" height="1" fill="#6f94c8"/><rect x="1" y="4" width="10" height="5" fill="url(#bg)"/><rect x="1" y="9" width="10" height="3" fill="#e8e8e8"/><rect x="0" y="0" width="1" height="13" fill="#4e5e70"/><rect x="11" y="0" width="1" height="13" fill="#4e5e70"/></svg>
<div style="position:absolute;left:50px;top:266px;font:normal 12.5px/14px 'Liberation Sans',sans-serif;color:#000;white-space:nowrap;letter-spacing:0.2px;word-spacing:-1px">Detail 1</div>
<svg style="position:absolute;left:20px;top:290px" width="8" height="1" viewBox="0 0 8 1"><rect x="0" y="0" width="1" height="1" fill="#a0a0a0"/><rect x="2" y="0" width="1" height="1" fill="#a0a0a0"/><rect x="4" y="0" width="1" height="1" fill="#a0a0a0"/><rect x="6" y="0" width="1" height="1" fill="#a0a0a0"/></svg>
<svg style="position:absolute;left:9px;top:285px" width="11" height="11" viewBox="0 0 11 11"><defs><linearGradient id="pb" x1="0" y1="0" x2="0" y2="1"><stop offset="0" stop-color="#fff"/><stop offset="0.5" stop-color="#f4f4f4"/><stop offset="1" stop-color="#d8d8d8"/></linearGradient></defs><rect x="0.5" y="0.5" width="10" height="10" rx="1.5" fill="url(#pb)" stroke="#8e8e8e"/><rect x="2" y="5" width="7" height="1" fill="#2d4f9e"/><rect x="5" y="2" width="1" height="7" fill="#2d4f9e"/></svg>
<svg style="position:absolute;left:26px;top:284px" width="16" height="13" viewBox="0 0 16 13"><defs><linearGradient id="bg" x1="0" y1="0" x2="0" y2="1"><stop offset="0" stop-color="#8db2de"/><stop offset="1" stop-color="#cfe0f3"/></linearGradient></defs><g transform="translate(2,0)"><rect x="1" y="0" width="10" height="3" fill="#eeeeee"/><rect x="1" y="3" width="10" height="1" fill="#6f94c8"/><rect x="1" y="4" width="10" height="5" fill="url(#bg)"/><rect x="1" y="9" width="10" height="3" fill="#e8e8e8"/><rect x="0" y="0" width="1" height="13" fill="#4e5e70"/><rect x="11" y="0" width="1" height="13" fill="#4e5e70"/><rect x="-2" y="5" width="16" height="3" fill="#000"/></g></svg>
<div style="position:absolute;left:50px;top:284px;font:normal 12.5px/14px 'Liberation Sans',sans-serif;color:#000;white-space:nowrap;letter-spacing:0.2px;word-spacing:-1px">Status Group Footer 1</div>
<svg style="position:absolute;left:20px;top:308px" width="8" height="1" viewBox="0 0 8 1"><rect x="0" y="0" width="1" height="1" fill="#a0a0a0"/><rect x="2" y="0" width="1" height="1" fill="#a0a0a0"/><rect x="4" y="0" width="1" height="1" fill="#a0a0a0"/><rect x="6" y="0" width="1" height="1" fill="#a0a0a0"/></svg>
<svg style="position:absolute;left:9px;top:303px" width="11" height="11" viewBox="0 0 11 11"><defs><linearGradient id="pb" x1="0" y1="0" x2="0" y2="1"><stop offset="0" stop-color="#fff"/><stop offset="0.5" stop-color="#f4f4f4"/><stop offset="1" stop-color="#d8d8d8"/></linearGradient></defs><rect x="0.5" y="0.5" width="10" height="10" rx="1.5" fill="url(#pb)" stroke="#8e8e8e"/><rect x="2" y="5" width="7" height="1" fill="#2d4f9e"/><rect x="5" y="2" width="1" height="7" fill="#2d4f9e"/></svg>
<svg style="position:absolute;left:28px;top:302px" width="12" height="13" viewBox="0 0 12 13"><defs><linearGradient id="bg" x1="0" y1="0" x2="0" y2="1"><stop offset="0" stop-color="#8db2de"/><stop offset="1" stop-color="#cfe0f3"/></linearGradient></defs><rect x="1" y="0" width="10" height="3" fill="#eeeeee"/><rect x="1" y="3" width="10" height="1" fill="#6f94c8"/><rect x="1" y="4" width="10" height="5" fill="url(#bg)"/><rect x="1" y="9" width="10" height="3" fill="#e8e8e8"/><rect x="0" y="0" width="1" height="13" fill="#4e5e70"/><rect x="11" y="0" width="1" height="13" fill="#4e5e70"/></svg>
<div style="position:absolute;left:50px;top:302px;font:normal 12.5px/14px 'Liberation Sans',sans-serif;color:#000;white-space:nowrap;letter-spacing:0.2px;word-spacing:-1px">Column Footer</div>
<svg style="position:absolute;left:20px;top:326px" width="8" height="1" viewBox="0 0 8 1"><rect x="0" y="0" width="1" height="1" fill="#a0a0a0"/><rect x="2" y="0" width="1" height="1" fill="#a0a0a0"/><rect x="4" y="0" width="1" height="1" fill="#a0a0a0"/><rect x="6" y="0" width="1" height="1" fill="#a0a0a0"/></svg>
<svg style="position:absolute;left:9px;top:321px" width="11" height="11" viewBox="0 0 11 11"><defs><linearGradient id="pb" x1="0" y1="0" x2="0" y2="1"><stop offset="0" stop-color="#fff"/><stop offset="0.5" stop-color="#f4f4f4"/><stop offset="1" stop-color="#d8d8d8"/></linearGradient></defs><rect x="0.5" y="0.5" width="10" height="10" rx="1.5" fill="url(#pb)" stroke="#8e8e8e"/><rect x="2" y="5" width="7" height="1" fill="#2d4f9e"/><rect x="5" y="2" width="1" height="7" fill="#2d4f9e"/></svg>
<svg style="position:absolute;left:28px;top:320px" width="12" height="13" viewBox="0 0 12 13"><defs><linearGradient id="bg" x1="0" y1="0" x2="0" y2="1"><stop offset="0" stop-color="#8db2de"/><stop offset="1" stop-color="#cfe0f3"/></linearGradient></defs><rect x="1" y="0" width="10" height="3" fill="#eeeeee"/><rect x="1" y="3" width="10" height="1" fill="#6f94c8"/><rect x="1" y="4" width="10" height="5" fill="url(#bg)"/><rect x="1" y="9" width="10" height="3" fill="#e8e8e8"/><rect x="0" y="0" width="1" height="13" fill="#4e5e70"/><rect x="11" y="0" width="1" height="13" fill="#4e5e70"/></svg>
<div style="position:absolute;left:50px;top:320px;font:normal 12.5px/14px 'Liberation Sans',sans-serif;color:#000;white-space:nowrap;letter-spacing:0.2px;word-spacing:-1px">Page Footer</div>
<svg style="position:absolute;left:16px;top:344px" width="8" height="1" viewBox="0 0 8 1"><rect x="0" y="0" width="1" height="1" fill="#a0a0a0"/><rect x="2" y="0" width="1" height="1" fill="#a0a0a0"/><rect x="4" y="0" width="1" height="1" fill="#a0a0a0"/><rect x="6" y="0" width="1" height="1" fill="#a0a0a0"/></svg>
<svg style="position:absolute;left:28px;top:338px" width="12" height="13" viewBox="0 0 12 13"><defs><linearGradient id="bg" x1="0" y1="0" x2="0" y2="1"><stop offset="0" stop-color="#8db2de"/><stop offset="1" stop-color="#cfe0f3"/></linearGradient></defs><rect x="1" y="0" width="10" height="3" fill="#eeeeee"/><rect x="1" y="3" width="10" height="1" fill="#6f94c8"/><rect x="1" y="4" width="10" height="5" fill="url(#bg)"/><rect x="1" y="9" width="10" height="3" fill="#e8e8e8"/><rect x="0" y="0" width="1" height="13" fill="#4e5e70"/><rect x="11" y="0" width="1" height="13" fill="#4e5e70"/></svg>
<div style="position:absolute;left:50px;top:338px;font:normal 12.5px/14px 'Liberation Sans',sans-serif;color:#a0a0a0;white-space:nowrap;letter-spacing:0.2px;word-spacing:-1px">Last Page Footer</div>
<svg style="position:absolute;left:20px;top:362px" width="8" height="1" viewBox="0 0 8 1"><rect x="0" y="0" width="1" height="1" fill="#a0a0a0"/><rect x="2" y="0" width="1" height="1" fill="#a0a0a0"/><rect x="4" y="0" width="1" height="1" fill="#a0a0a0"/><rect x="6" y="0" width="1" height="1" fill="#a0a0a0"/></svg>
<svg style="position:absolute;left:9px;top:357px" width="11" height="11" viewBox="0 0 11 11"><defs><linearGradient id="pb" x1="0" y1="0" x2="0" y2="1"><stop offset="0" stop-color="#fff"/><stop offset="0.5" stop-color="#f4f4f4"/><stop offset="1" stop-color="#d8d8d8"/></linearGradient></defs><rect x="0.5" y="0.5" width="10" height="10" rx="1.5" fill="url(#pb)" stroke="#8e8e8e"/><rect x="2" y="5" width="7" height="1" fill="#2d4f9e"/></svg>
<svg style="position:absolute;left:28px;top:356px" width="12" height="13" viewBox="0 0 12 13"><defs><linearGradient id="bg" x1="0" y1="0" x2="0" y2="1"><stop offset="0" stop-color="#8db2de"/><stop offset="1" stop-color="#cfe0f3"/></linearGradient></defs><rect x="1" y="0" width="10" height="3" fill="#eeeeee"/><rect x="1" y="3" width="10" height="1" fill="#6f94c8"/><rect x="1" y="4" width="10" height="5" fill="url(#bg)"/><rect x="1" y="9" width="10" height="3" fill="#e8e8e8"/><rect x="0" y="0" width="1" height="13" fill="#4e5e70"/><rect x="11" y="0" width="1" height="13" fill="#4e5e70"/></svg>
<div style="position:absolute;left:50px;top:356px;font:normal 12.5px/14px 'Liberation Sans',sans-serif;color:#000;white-space:nowrap;letter-spacing:0.2px;word-spacing:-1px">Summary</div>
<svg style="position:absolute;left:33px;top:368px" width="1" height="12" viewBox="0 0 1 12"><rect x="0" y="0" width="1" height="1" fill="#a0a0a0"/><rect x="0" y="2" width="1" height="1" fill="#a0a0a0"/><rect x="0" y="4" width="1" height="1" fill="#a0a0a0"/><rect x="0" y="6" width="1" height="1" fill="#a0a0a0"/><rect x="0" y="8" width="1" height="1" fill="#a0a0a0"/><rect x="0" y="10" width="1" height="1" fill="#a0a0a0"/></svg>
<svg style="position:absolute;left:33px;top:380px" width="11" height="1" viewBox="0 0 11 1"><rect x="0" y="0" width="1" height="1" fill="#a0a0a0"/><rect x="2" y="0" width="1" height="1" fill="#a0a0a0"/><rect x="4" y="0" width="1" height="1" fill="#a0a0a0"/><rect x="6" y="0" width="1" height="1" fill="#a0a0a0"/><rect x="8" y="0" width="1" height="1" fill="#a0a0a0"/><rect x="10" y="0" width="1" height="1" fill="#a0a0a0"/></svg>
<div style="position:absolute;left:68px;top:371px;width:58px;height:18px;background:#e1e1e1"></div>
<svg style="position:absolute;left:45px;top:373px" width="16" height="14" viewBox="0 0 16 14"><rect x="0.5" y="0.5" width="15" height="13" rx="1.5" fill="#f2f5f8" stroke="#6b7b8b"/><rect x="2" y="2" width="12" height="1.5" fill="#8aa4c0"/><path d="M3 11 H13 M3 8 H13" stroke="#d8dee6" stroke-width="0.8"/><path d="M2 10 L8 7.5 L14 5" stroke="#5cc23a" stroke-width="1.8" fill="none"/><path d="M2 6.5 L8 9 L14 9.5" stroke="#f08a24" stroke-width="1.8" fill="none"/></svg>
<div style="position:absolute;left:69.5px;top:374px;font:normal 12.5px/14px 'Liberation Sans',sans-serif;color:#000;white-space:nowrap;letter-spacing:0.2px;word-spacing:-1px">Bar Chart</div>
<svg style="position:absolute;left:16px;top:398px" width="8" height="1" viewBox="0 0 8 1"><rect x="0" y="0" width="1" height="1" fill="#a0a0a0"/><rect x="2" y="0" width="1" height="1" fill="#a0a0a0"/><rect x="4" y="0" width="1" height="1" fill="#a0a0a0"/><rect x="6" y="0" width="1" height="1" fill="#a0a0a0"/></svg>
<svg style="position:absolute;left:28px;top:392px" width="12" height="13" viewBox="0 0 12 13"><defs><linearGradient id="bg" x1="0" y1="0" x2="0" y2="1"><stop offset="0" stop-color="#8db2de"/><stop offset="1" stop-color="#cfe0f3"/></linearGradient></defs><rect x="1" y="0" width="10" height="3" fill="#eeeeee"/><rect x="1" y="3" width="10" height="1" fill="#6f94c8"/><rect x="1" y="4" width="10" height="5" fill="url(#bg)"/><rect x="1" y="9" width="10" height="3" fill="#e8e8e8"/><rect x="0" y="0" width="1" height="13" fill="#4e5e70"/><rect x="11" y="0" width="1" height="13" fill="#4e5e70"/></svg>
<div style="position:absolute;left:50px;top:392px;font:normal 12.5px/14px 'Liberation Sans',sans-serif;color:#a0a0a0;white-space:nowrap;letter-spacing:0.2px;word-spacing:-1px">No Data</div>
<svg style="position:absolute;left:20px;top:416px" width="8" height="1" viewBox="0 0 8 1"><rect x="0" y="0" width="1" height="1" fill="#a0a0a0"/><rect x="2" y="0" width="1" height="1" fill="#a0a0a0"/><rect x="4" y="0" width="1" height="1" fill="#a0a0a0"/><rect x="6" y="0" width="1" height="1" fill="#a0a0a0"/></svg>
<svg style="position:absolute;left:9px;top:411px" width="11" height="11" viewBox="0 0 11 11"><defs><linearGradient id="pb" x1="0" y1="0" x2="0" y2="1"><stop offset="0" stop-color="#fff"/><stop offset="0.5" stop-color="#f4f4f4"/><stop offset="1" stop-color="#d8d8d8"/></linearGradient></defs><rect x="0.5" y="0.5" width="10" height="10" rx="1.5" fill="url(#pb)" stroke="#8e8e8e"/><rect x="2" y="5" width="7" height="1" fill="#2d4f9e"/><rect x="5" y="2" width="1" height="7" fill="#2d4f9e"/></svg>
<svg style="position:absolute;left:28px;top:410px" width="12" height="13" viewBox="0 0 12 13"><defs><linearGradient id="bg" x1="0" y1="0" x2="0" y2="1"><stop offset="0" stop-color="#8db2de"/><stop offset="1" stop-color="#cfe0f3"/></linearGradient></defs><rect x="1" y="0" width="10" height="3" fill="#eeeeee"/><rect x="1" y="3" width="10" height="1" fill="#6f94c8"/><rect x="1" y="4" width="10" height="5" fill="url(#bg)"/><rect x="1" y="9" width="10" height="3" fill="#e8e8e8"/><rect x="0" y="0" width="1" height="13" fill="#4e5e70"/><rect x="11" y="0" width="1" height="13" fill="#4e5e70"/></svg>
<div style="position:absolute;left:50px;top:410px;font:normal 12.5px/14px 'Liberation Sans',sans-serif;color:#000;white-space:nowrap;letter-spacing:0.2px;word-spacing:-1px">Background</div>
<div style="position:absolute;left:309px;top:61px;width:41px;height:21px;box-sizing:border-box;border:1px solid #83a1bc;border-bottom:none;border-radius:3px 3px 0 0;background:linear-gradient(#f9f8f4,#ebe9e2)"></div>
<div style="position:absolute;left:314px;top:65px;font:normal 13px/15px 'Liberation Sans',sans-serif;color:#000;white-space:nowrap;">...ml</div>
<div style="position:absolute;left:349px;top:61px;width:98px;height:21px;box-sizing:border-box;border:1px solid #83a1bc;border-bottom:none;border-radius:3px 3px 0 0;background:linear-gradient(#f9f8f4,#ebe9e2)"></div>
<svg style="position:absolute;left:354px;top:64px" width="17" height="16" viewBox="0 0 17 16"><path d="M1.5 0.5 H10 L13.5 4 V14.5 H1.5 Z" fill="#dbe6f1" stroke="#66778a"/><path d="M10 0.5 L13.5 4 H10 Z" fill="#f7f9fb" stroke="#66778a" stroke-linejoin="miter"/><rect x="2" y="12.6" width="11" height="1.5" fill="#fff"/><path d="M0.2 12.6 L7.5 5.2 L10.3 8 L11.5 7 L16.3 12 L16 12.6 Z" fill="#9c9c9c"/><path d="M0.2 12.6 L7.5 5.2 L10.3 8 L7.2 12.6 Z" fill="#a80000"/><path d="M0.3 12.5 L7.5 5.2 L10.3 8 M11.3 7 L16.2 11.9" fill="none" stroke="#000" stroke-width="1.1"/></svg>
<div style="position:absolute;left:374.5px;top:65px;font:normal 13px/15px 'Liberation Sans',sans-serif;color:#000;white-space:nowrap;">report17</div>
<svg style="position:absolute;left:434px;top:71px" width="7" height="6" viewBox="0 0 7 6"><path d="M1 0.8 L6 5.2 M6 0.8 L1 5.2" stroke="#222" stroke-width="1.5"/></svg>
<div style="position:absolute;left:446px;top:61px;width:200px;height:21px;box-sizing:border-box;border:1px solid #83a1bc;border-bottom:none;border-radius:3px 3px 0 0;background:linear-gradient(#f9f8f4,#ebe9e2)"></div>
<svg style="position:absolute;left:451px;top:64px" width="17" height="16" viewBox="0 0 17 16"><path d="M1.5 0.5 H10 L13.5 4 V14.5 H1.5 Z" fill="#dbe6f1" stroke="#66778a"/><path d="M10 0.5 L13.5 4 H10 Z" fill="#f7f9fb" stroke="#66778a" stroke-linejoin="miter"/><rect x="2" y="12.6" width="11" height="1.5" fill="#fff"/><path d="M0.2 12.6 L7.5 5.2 L10.3 8 L11.5 7 L16.3 12 L16 12.6 Z" fill="#9c9c9c"/><path d="M0.2 12.6 L7.5 5.2 L10.3 8 L7.2 12.6 Z" fill="#a80000"/><path d="M0.3 12.5 L7.5 5.2 L10.3 8 M11.3 7 L16.2 11.9" fill="none" stroke="#000" stroke-width="1.1"/></svg>
<div style="position:absolute;left:471.5px;top:65px;font:normal 13px/15px 'Liberation Sans',sans-serif;color:#000;white-space:nowrap;">report17_subreport1.jrxml</div>
<svg style="position:absolute;left:633px;top:71px" width="7" height="6" viewBox="0 0 7 6"><path d="M1 0.8 L6 5.2 M6 0.8 L1 5.2" stroke="#222" stroke-width="1.5"/></svg>
<div style="position:absolute;left:645px;top:61px;width:269px;height:21px;box-sizing:border-box;border:1px solid #83a1bc;border-bottom:none;border-radius:3px 3px 0 0;background:linear-gradient(#f9f8f4,#ebe9e2)"></div>
<svg style="position:absolute;left:650px;top:64px" width="17" height="16" viewBox="0 0 17 16"><path d="M1.5 0.5 H10 L13.5 4 V14.5 H1.5 Z" fill="#dbe6f1" stroke="#66778a"/><path d="M10 0.5 L13.5 4 H10 Z" fill="#f7f9fb" stroke="#66778a" stroke-linejoin="miter"/><rect x="2" y="12.6" width="11" height="1.5" fill="#fff"/><path d="M0.2 12.6 L7.5 5.2 L10.3 8 L11.5 7 L16.3 12 L16 12.6 Z" fill="#9c9c9c"/><path d="M0.2 12.6 L7.5 5.2 L10.3 8 L7.2 12.6 Z" fill="#a80000"/><path d="M0.3 12.5 L7.5 5.2 L10.3 8 M11.3 7 L16.2 11.9" fill="none" stroke="#000" stroke-width="1.1"/></svg>
<div style="position:absolute;left:670.5px;top:65px;font:normal 13px/15px 'Liberation Sans',sans-serif;color:#000;white-space:nowrap;">report17_subreport1_subreport1.jrxml</div>
<svg style="position:absolute;left:901px;top:71px" width="7" height="6" viewBox="0 0 7 6"><path d="M1 0.8 L6 5.2 M6 0.8 L1 5.2" stroke="#222" stroke-width="1.5"/></svg>
<div style="position:absolute;left:914px;top:61px;width:33px;height:21px;background:linear-gradient(#e9eef8,#d9e3f3)"></div>
<div style="position:absolute;left:914px;top:61px;width:33px;height:3px;background:linear-gradient(#f7b23c,#ee9a28);border-radius:3px 0 0 0"></div>
<svg style="position:absolute;left:919px;top:64px" width="17" height="16" viewBox="0 0 17 16"><path d="M1.5 0.5 H10 L13.5 4 V14.5 H1.5 Z" fill="#dbe6f1" stroke="#66778a"/><path d="M10 0.5 L13.5 4 H10 Z" fill="#f7f9fb" stroke="#66778a" stroke-linejoin="miter"/><rect x="2" y="12.6" width="11" height="1.5" fill="#fff"/><path d="M0.2 12.6 L7.5 5.2 L10.3 8 L11.5 7 L16.3 12 L16 12.6 Z" fill="#9c9c9c"/><path d="M0.2 12.6 L7.5 5.2 L10.3 8 L7.2 12.6 Z" fill="#a80000"/><path d="M0.3 12.5 L7.5 5.2 L10.3 8 M11.3 7 L16.2 11.9" fill="none" stroke="#000" stroke-width="1.1"/></svg>
<div style="position:absolute;left:939.5px;top:65px;font:normal 13px/15px 'Liberation Sans',sans-serif;color:#000;white-space:nowrap;">report17_subreport1_subreport1_subreport1.jrxml</div>
<div style="position:absolute;left:309px;top:81px;width:605px;height:1px;background:#83a1bc"></div>
<div style="position:absolute;left:914px;top:81px;width:33px;height:1px;background:#dfe6f2"></div>
<div style="position:absolute;left:309px;top:81px;width:1px;height:609px;background:#83a1bc"></div>
<div style="position:absolute;left:310px;top:82px;width:637px;height:29px;background:#f0f0f0"></div>
<div style="position:absolute;left:310px;top:82px;width:637px;height:1px;background:#f7f3e3"></div>
<div style="position:absolute;left:310px;top:111px;width:637px;height:1px;background:#83a1bc"></div>
<div style="position:absolute;left:310px;top:87px;width:67px;height:23px;box-sizing:border-box;border:1px solid #585858;border-radius:4px;background:linear-gradient(#cfcfcf,#e6e6e6 35%,#e9e9e9 65%,#dcdcdc)"></div>
<div style="position:absolute;left:319px;top:92px;font:normal 12.5px/14px 'Liberation Sans',sans-serif;color:#000;white-space:nowrap;">Designer</div>
<div style="position:absolute;left:397.5px;top:92px;font:normal 12.5px/14px 'Liberation Sans',sans-serif;color:#000;white-space:nowrap;">XML</div>
<div style="position:absolute;left:455px;top:92px;font:normal 12.5px/14px 'Liberation Sans',sans-serif;color:#000;white-space:nowrap;">Preview</div>
<div style="position:absolute;left:511px;top:88px;width:1px;height:20px;background:#8f8f8f"></div>
<div style="position:absolute;left:512px;top:88px;width:1px;height:20px;background:#fdfdfd"></div>
<div style="position:absolute;left:581px;top:88px;width:1px;height:20px;background:#8f8f8f"></div>
<div style="position:absolute;left:582px;top:88px;width:1px;height:20px;background:#fdfdfd"></div>
<div style="position:absolute;left:605px;top:88px;width:1px;height:20px;background:#8f8f8f"></div>
<div style="position:absolute;left:606px;top:88px;width:1px;height:20px;background:#fdfdfd"></div>
<div style="position:absolute;left:943px;top:88px;width:1px;height:20px;background:#8f8f8f"></div>
<div style="position:absolute;left:944px;top:88px;width:1px;height:20px;background:#fdfdfd"></div>
<svg style="position:absolute;left:514px;top:88px" width="18" height="17" viewBox="0 0 18 17"><ellipse cx="8" cy="3" rx="6.5" ry="2.5" fill="#dde6ee" stroke="#6f8292"/><path d="M1.5 3 V10 C1.5 13, 14.5 13, 14.5 10 V3" fill="#c8d4de" stroke="#6f8292"/><path d="M1.5 6 C1.5 8.5, 14.5 8.5, 14.5 6 M1.5 8.5 C1.5 11, 14.5 11, 14.5 8.5" fill="none" stroke="#6f8292"/><path d="M4 10.5 H11 V8 L16.5 12 L11 16 V13.5 H6 C3 13.5, 2 12, 2 10" fill="#f4f7fa" stroke="#6f8292"/></svg>
<svg style="position:absolute;left:539px;top:90px" width="15" height="15" viewBox="0 0 15 15"><path d="M9.5 9.5 L13.5 13.5" stroke="#c8922e" stroke-width="2.4" stroke-linecap="round"/><circle cx="6" cy="6" r="5.2" fill="#d6e6f8" stroke="#2f64b8" stroke-width="1.3"/><path d="M3.3 6 H8.7" stroke="#1b3f8a" stroke-width="1.6"/><path d="M6 3.3 V8.7" stroke="#1b3f8a" stroke-width="1.6"/></svg>
<svg style="position:absolute;left:562px;top:90px" width="15" height="15" viewBox="0 0 15 15"><path d="M9.5 9.5 L13.5 13.5" stroke="#c8922e" stroke-width="2.4" stroke-linecap="round"/><circle cx="6" cy="6" r="5.2" fill="#d6e6f8" stroke="#2f64b8" stroke-width="1.3"/><path d="M3.3 6 H8.7" stroke="#1b3f8a" stroke-width="1.6"/></svg>
<svg style="position:absolute;left:584px;top:88px" width="18" height="18" viewBox="0 0 18 18"><path d="M7.5 2.5 H13 L16.5 6 V16.5 H7.5 Z" fill="#e8eef4" stroke="#6f8090"/><path d="M1 4 C2 1.5, 6 1, 10 2 L11 5 H1.5 Z" fill="#7a8ea0" stroke="#556677" stroke-width="0.8"/><rect x="4" y="5" width="3" height="11" rx="1" fill="#5b93cf" stroke="#39679b" stroke-width="0.8"/></svg>
<div style="position:absolute;left:607px;top:87px;width:168px;height:21px;box-sizing:border-box;border:1px solid #a0a5ab;background:#fff"></div>
<div style="position:absolute;left:774px;top:87px;width:121px;height:21px;box-sizing:border-box;border:1px solid #a0a5ab;background:#fff"></div>
<div style="position:absolute;left:611px;top:91px;font:normal 12.5px/14px 'Liberation Sans',sans-serif;color:#6a6a6a;white-space:nowrap;">SansSerif</div>
<div style="position:absolute;left:778px;top:91px;font:normal 12.5px/14px 'Liberation Sans',sans-serif;color:#6a6a6a;white-space:nowrap;">10</div>
<svg style="position:absolute;left:760px;top:95px" width="10" height="6" viewBox="0 0 10 6"><path d="M0 0 H9 L4.5 5 Z" fill="#555"/></svg>
<svg style="position:absolute;left:881px;top:95px" width="10" height="6" viewBox="0 0 10 6"><path d="M0 0 H9 L4.5 5 Z" fill="#555"/></svg>
<svg style="position:absolute;left:898px;top:91px" width="17" height="15" viewBox="0 0 17 15"><path d="M0 5.5 L3.5 1.5 L7 5.5 Z" fill="#7a7a7a"/><path d="M1.5 14 L8.5 1 H13 L15 14 H11.5 L11.2 11 H7.5 L5.8 14 Z M8.7 8.5 H11 L10.8 4.5 Z" fill="#7a7a7a" fill-rule="evenodd"/></svg>
<svg style="position:absolute;left:921px;top:92px" width="15" height="13" viewBox="0 0 15 13"><path d="M0 1 H7 L3.5 5 Z" fill="#7a7a7a"/><path d="M1.5 12 L7.5 2 H11 L13 12 H10 L9.7 9.8 H6.8 L5.3 12 Z M8 7.7 H9.5 L9.3 5 Z" fill="#7a7a7a" fill-rule="evenodd"/></svg>
<div style="position:absolute;left:310px;top:112px;width:20px;height:20px;background:#efefef"></div>
<div style="position:absolute;left:330px;top:112px;width:617px;height:19px;background:linear-gradient(#fbfbfb,#e9e9e9 35%,#f3f3f3 65%,#fdfdfd)"></div>
<div style="position:absolute;left:330px;top:112px;width:30px;height:19px;background:linear-gradient(#f0f0f0,#c9c9c9 35%,#c6c6c6)"></div>
<div style="position:absolute;left:915px;top:112px;width:32px;height:19px;background:linear-gradient(#f0f0f0,#c9c9c9 35%,#c6c6c6)"></div>
<div style="position:absolute;left:330px;top:131px;width:617px;height:1px;background:#83a1bc"></div>
<svg style="position:absolute;left:330px;top:112px" width="617" height="19" viewBox="0 0 617 19"><rect x="1" y="15" width="1" height="4" fill="#000"/><rect x="8" y="15" width="1" height="4" fill="#000"/><rect x="16" y="15" width="1" height="4" fill="#000"/><rect x="23" y="15" width="1" height="4" fill="#000"/><rect x="30" y="11" width="1" height="8" fill="#000"/><rect x="37" y="15" width="1" height="4" fill="#000"/><rect x="44" y="15" width="1" height="4" fill="#000"/><rect x="52" y="15" width="1" height="4" fill="#000"/><rect x="59" y="15" width="1" height="4" fill="#000"/><rect x="66" y="13" width="1" height="6" fill="#000"/><rect x="73" y="15" width="1" height="4" fill="#000"/><rect x="80" y="15" width="1" height="4" fill="#000"/><rect x="88" y="15" width="1" height="4" fill="#000"/><rect x="95" y="15" width="1" height="4" fill="#000"/><rect x="102" y="11" width="1" height="8" fill="#000"/><rect x="109" y="15" width="1" height="4" fill="#000"/><rect x="116" y="15" width="1" height="4" fill="#000"/><rect x="124" y="15" width="1" height="4" fill="#000"/><rect x="131" y="15" width="1" height="4" fill="#000"/><rect x="138" y="13" width="1" height="6" fill="#000"/><rect x="145" y="15" width="1" height="4" fill="#000"/><rect x="152" y="15" width="1" height="4" fill="#000"/><rect x="160" y="15" width="1" height="4" fill="#000"/><rect x="167" y="15" width="1" height="4" fill="#000"/><rect x="174" y="11" width="1" height="8" fill="#000"/><rect x="181" y="15" width="1" height="4" fill="#000"/><rect x="188" y="15" width="1" height="4" fill="#000"/><rect x="196" y="15" width="1" height="4" fill="#000"/><rect x="203" y="15" width="1" height="4" fill="#000"/><rect x="210" y="13" width="1" height="6" fill="#000"/><rect x="217" y="15" width="1" height="4" fill="#000"/><rect x="224" y="15" width="1" height="4" fill="#000"/><rect x="232" y="15" width="1" height="4" fill="#000"/><rect x="239" y="15" width="1" height="4" fill="#000"/><rect x="246" y="11" width="1" height="8" fill="#000"/><rect x="253" y="15" width="1" height="4" fill="#000"/><rect x="260" y="15" width="1" height="4" fill="#000"/><rect x="268" y="15" width="1" height="4" fill="#000"/><rect x="275" y="15" width="1" height="4" fill="#000"/><rect x="282" y="13" width="1" height="6" fill="#000"/><rect x="289" y="15" width="1" height="4" fill="#000"/><rect x="296" y="15" width="1" height="4" fill="#000"/><rect x="304" y="15" width="1" height="4" fill="#000"/><rect x="311" y="15" width="1" height="4" fill="#000"/><rect x="318" y="11" width="1" height="8" fill="#000"/><rect x="325" y="15" width="1" height="4" fill="#000"/><rect x="332" y="15" width="1" height="4" fill="#000"/><rect x="340" y="15" width="1" height="4" fill="#000"/><rect x="347" y="15" width="1" height="4" fill="#000"/><rect x="354" y="13" width="1" height="6" fill="#000"/><rect x="361" y="15" width="1" height="4" fill="#000"/><rect x="368" y="15" width="1" height="4" fill="#000"/><rect x="376" y="15" width="1" height="4" fill="#000"/><rect x="383" y="15" width="1" height="4" fill="#000"/><rect x="390" y="11" width="1" height="8" fill="#000"/><rect x="397" y="15" width="1" height="4" fill="#000"/><rect x="404" y="15" width="1" height="4" fill="#000"/><rect x="412" y="15" width="1" height="4" fill="#000"/><rect x="419" y="15" width="1" height="4" fill="#000"/><rect x="426" y="13" width="1" height="6" fill="#000"/><rect x="433" y="15" width="1" height="4" fill="#000"/><rect x="440" y="15" width="1" height="4" fill="#000"/><rect x="448" y="15" width="1" height="4" fill="#000"/><rect x="455" y="15" width="1" height="4" fill="#000"/><rect x="462" y="11" width="1" height="8" fill="#000"/><rect x="469" y="15" width="1" height="4" fill="#000"/><rect x="476" y="15" width="1" height="4" fill="#000"/><rect x="484" y="15" width="1" height="4" fill="#000"/><rect x="491" y="15" width="1" height="4" fill="#000"/><rect x="498" y="13" width="1" height="6" fill="#000"/><rect x="505" y="15" width="1" height="4" fill="#000"/><rect x="512" y="15" width="1" height="4" fill="#000"/><rect x="520" y="15" width="1" height="4" fill="#000"/><rect x="527" y="15" width="1" height="4" fill="#000"/><rect x="534" y="11" width="1" height="8" fill="#000"/><rect x="541" y="15" width="1" height="4" fill="#000"/><rect x="548" y="15" width="1" height="4" fill="#000"/><rect x="556" y="15" width="1" height="4" fill="#000"/><rect x="563" y="15" width="1" height="4" fill="#000"/><rect x="570" y="13" width="1" height="6" fill="#000"/><rect x="577" y="15" width="1" height="4" fill="#000"/><rect x="584" y="15" width="1" height="4" fill="#000"/><rect x="592" y="15" width="1" height="4" fill="#000"/><rect x="599" y="15" width="1" height="4" fill="#000"/><rect x="606" y="11" width="1" height="8" fill="#000"/><rect x="613" y="15" width="1" height="4" fill="#000"/></svg>
<svg style="position:absolute;left:330px;top:112px" width="617" height="19" viewBox="0 0 617 19"><g fill="#000" shape-rendering="crispEdges"><rect x="28" y="1" width="1" height="1"/><rect x="29" y="1" width="1" height="1"/><rect x="30" y="1" width="1" height="1"/><rect x="31" y="1" width="1" height="1"/><rect x="27" y="2" width="1" height="1"/><rect x="32" y="2" width="1" height="1"/><rect x="27" y="3" width="1" height="1"/><rect x="32" y="3" width="1" height="1"/><rect x="27" y="4" width="1" height="1"/><rect x="32" y="4" width="1" height="1"/><rect x="27" y="5" width="1" height="1"/><rect x="32" y="5" width="1" height="1"/><rect x="27" y="6" width="1" height="1"/><rect x="32" y="6" width="1" height="1"/><rect x="27" y="7" width="1" height="1"/><rect x="32" y="7" width="1" height="1"/><rect x="27" y="8" width="1" height="1"/><rect x="32" y="8" width="1" height="1"/><rect x="28" y="9" width="1" height="1"/><rect x="29" y="9" width="1" height="1"/><rect x="30" y="9" width="1" height="1"/><rect x="31" y="9" width="1" height="1"/><rect x="102" y="1" width="1" height="1"/><rect x="101" y="2" width="1" height="1"/><rect x="102" y="2" width="1" height="1"/><rect x="102" y="3" width="1" height="1"/><rect x="102" y="4" width="1" height="1"/><rect x="102" y="5" width="1" height="1"/><rect x="102" y="6" width="1" height="1"/><rect x="102" y="7" width="1" height="1"/><rect x="102" y="8" width="1" height="1"/><rect x="100" y="9" width="1" height="1"/><rect x="101" y="9" width="1" height="1"/><rect x="102" y="9" width="1" height="1"/><rect x="103" y="9" width="1" height="1"/><rect x="104" y="9" width="1" height="1"/><rect x="172" y="1" width="1" height="1"/><rect x="173" y="1" width="1" height="1"/><rect x="174" y="1" width="1" height="1"/><rect x="175" y="1" width="1" height="1"/><rect x="171" y="2" width="1" height="1"/><rect x="176" y="2" width="1" height="1"/><rect x="176" y="3" width="1" height="1"/><rect x="176" y="4" width="1" height="1"/><rect x="175" y="5" width="1" height="1"/><rect x="173" y="6" width="1" height="1"/><rect x="174" y="6" width="1" height="1"/><rect x="172" y="7" width="1" height="1"/><rect x="171" y="8" width="1" height="1"/><rect x="171" y="9" width="1" height="1"/><rect x="172" y="9" width="1" height="1"/><rect x="173" y="9" width="1" height="1"/><rect x="174" y="9" width="1" height="1"/><rect x="175" y="9" width="1" height="1"/><rect x="176" y="9" width="1" height="1"/><rect x="244" y="1" width="1" height="1"/><rect x="245" y="1" width="1" height="1"/><rect x="246" y="1" width="1" height="1"/><rect x="247" y="1" width="1" height="1"/><rect x="243" y="2" width="1" height="1"/><rect x="248" y="2" width="1" height="1"/><rect x="248" y="3" width="1" height="1"/><rect x="248" y="4" width="1" height="1"/><rect x="245" y="5" width="1" height="1"/><rect x="246" y="5" width="1" height="1"/><rect x="247" y="5" width="1" height="1"/><rect x="248" y="6" width="1" height="1"/><rect x="248" y="7" width="1" height="1"/><rect x="243" y="8" width="1" height="1"/><rect x="248" y="8" width="1" height="1"/><rect x="244" y="9" width="1" height="1"/><rect x="245" y="9" width="1" height="1"/><rect x="246" y="9" width="1" height="1"/><rect x="247" y="9" width="1" height="1"/><rect x="319" y="1" width="1" height="1"/><rect x="318" y="2" width="1" height="1"/><rect x="319" y="2" width="1" height="1"/><rect x="317" y="3" width="1" height="1"/><rect x="319" y="3" width="1" height="1"/><rect x="316" y="4" width="1" height="1"/><rect x="319" y="4" width="1" height="1"/><rect x="315" y="5" width="1" height="1"/><rect x="319" y="5" width="1" height="1"/><rect x="315" y="6" width="1" height="1"/><rect x="316" y="6" width="1" height="1"/><rect x="317" y="6" width="1" height="1"/><rect x="318" y="6" width="1" height="1"/><rect x="319" y="6" width="1" height="1"/><rect x="320" y="6" width="1" height="1"/><rect x="319" y="7" width="1" height="1"/><rect x="319" y="8" width="1" height="1"/><rect x="319" y="9" width="1" height="1"/><rect x="387" y="1" width="1" height="1"/><rect x="388" y="1" width="1" height="1"/><rect x="389" y="1" width="1" height="1"/><rect x="390" y="1" width="1" height="1"/><rect x="391" y="1" width="1" height="1"/><rect x="392" y="1" width="1" height="1"/><rect x="387" y="2" width="1" height="1"/><rect x="387" y="3" width="1" height="1"/><rect x="387" y="4" width="1" height="1"/><rect x="388" y="4" width="1" height="1"/><rect x="389" y="4" width="1" height="1"/><rect x="390" y="4" width="1" height="1"/><rect x="391" y="4" width="1" height="1"/><rect x="392" y="5" width="1" height="1"/><rect x="392" y="6" width="1" height="1"/><rect x="392" y="7" width="1" height="1"/><rect x="387" y="8" width="1" height="1"/><rect x="392" y="8" width="1" height="1"/><rect x="388" y="9" width="1" height="1"/><rect x="389" y="9" width="1" height="1"/><rect x="390" y="9" width="1" height="1"/><rect x="391" y="9" width="1" height="1"/><rect x="461" y="1" width="1" height="1"/><rect x="462" y="1" width="1" height="1"/><rect x="463" y="1" width="1" height="1"/><rect x="460" y="2" width="1" height="1"/><rect x="459" y="3" width="1" height="1"/><rect x="459" y="4" width="1" height="1"/><rect x="460" y="4" width="1" height="1"/><rect x="461" y="4" width="1" height="1"/><rect x="462" y="4" width="1" height="1"/><rect x="463" y="4" width="1" height="1"/><rect x="459" y="5" width="1" height="1"/><rect x="464" y="5" width="1" height="1"/><rect x="459" y="6" width="1" height="1"/><rect x="464" y="6" width="1" height="1"/><rect x="459" y="7" width="1" height="1"/><rect x="464" y="7" width="1" height="1"/><rect x="459" y="8" width="1" height="1"/><rect x="464" y="8" width="1" height="1"/><rect x="460" y="9" width="1" height="1"/><rect x="461" y="9" width="1" height="1"/><rect x="462" y="9" width="1" height="1"/><rect x="463" y="9" width="1" height="1"/><rect x="531" y="1" width="1" height="1"/><rect x="532" y="1" width="1" height="1"/><rect x="533" y="1" width="1" height="1"/><rect x="534" y="1" width="1" height="1"/><rect x="535" y="1" width="1" height="1"/><rect x="536" y="1" width="1" height="1"/><rect x="536" y="2" width="1" height="1"/><rect x="535" y="3" width="1" height="1"/><rect x="535" y="4" width="1" height="1"/><rect x="534" y="5" width="1" height="1"/><rect x="534" y="6" width="1" height="1"/><rect x="533" y="7" width="1" height="1"/><rect x="533" y="8" width="1" height="1"/><rect x="532" y="9" width="1" height="1"/><rect x="604" y="1" width="1" height="1"/><rect x="605" y="1" width="1" height="1"/><rect x="606" y="1" width="1" height="1"/><rect x="607" y="1" width="1" height="1"/><rect x="603" y="2" width="1" height="1"/><rect x="608" y="2" width="1" height="1"/><rect x="603" y="3" width="1" height="1"/><rect x="608" y="3" width="1" height="1"/><rect x="603" y="4" width="1" height="1"/><rect x="608" y="4" width="1" height="1"/><rect x="604" y="5" width="1" height="1"/><rect x="605" y="5" width="1" height="1"/><rect x="606" y="5" width="1" height="1"/><rect x="607" y="5" width="1" height="1"/><rect x="603" y="6" width="1" height="1"/><rect x="608" y="6" width="1" height="1"/><rect x="603" y="7" width="1" height="1"/><rect x="608" y="7" width="1" height="1"/><rect x="603" y="8" width="1" height="1"/><rect x="608" y="8" width="1" height="1"/><rect x="604" y="9" width="1" height="1"/><rect x="605" y="9" width="1" height="1"/><rect x="606" y="9" width="1" height="1"/><rect x="607" y="9" width="1" height="1"/></g></svg>
<div style="position:absolute;left:432px;top:112px;width:1px;height:19px;background:#22b8c8;opacity:0.8"></div>
<div style="position:absolute;left:329px;top:132px;width:1px;height:558px;background:#83a1bc"></div>
<div style="position:absolute;left:310px;top:132px;width:19px;height:30px;background:linear-gradient(to right,#dcdcdc 0px,#ececec 2px,#bdbdbd 7px,#c6c6c6 12px,#cbcbcb 19px)"></div>
<div style="position:absolute;left:310px;top:644px;width:19px;height:46px;background:linear-gradient(to right,#dcdcdc 0px,#ececec 2px,#bdbdbd 7px,#c6c6c6 12px,#cbcbcb 19px)"></div>
<div style="position:absolute;left:310px;top:162px;width:19px;height:79px;background:linear-gradient(to right,#e6e6e6 0px,#f6f6f6 2px,#d3d3d3 7px,#ebebeb 12px,#ffffff 19px)"></div>
<div style="position:absolute;left:310px;top:241px;width:19px;height:35px;background:linear-gradient(to right,#e6d6d6 0px,#f7eeee 2px,#d8c2c2 7px,#efd7d7 12px,#fde3e3 19px)"></div>
<div style="position:absolute;left:310px;top:276px;width:19px;height:20px;background:linear-gradient(to right,#e6e6e6 0px,#f6f6f6 2px,#d3d3d3 7px,#ebebeb 12px,#ffffff 19px)"></div>
<div style="position:absolute;left:310px;top:296px;width:19px;height:50px;background:linear-gradient(to right,#e6d6d6 0px,#f7eeee 2px,#d8c2c2 7px,#efd7d7 12px,#fde3e3 19px)"></div>
<div style="position:absolute;left:310px;top:346px;width:19px;height:20px;background:linear-gradient(to right,#e6e6e6 0px,#f6f6f6 2px,#d3d3d3 7px,#ebebeb 12px,#ffffff 19px)"></div>
<div style="position:absolute;left:310px;top:366px;width:19px;height:50px;background:linear-gradient(to right,#e6d6d6 0px,#f7eeee 2px,#d8c2c2 7px,#efd7d7 12px,#fde3e3 19px)"></div>
<div style="position:absolute;left:310px;top:416px;width:19px;height:19px;background:linear-gradient(to right,#e6e6e6 0px,#f6f6f6 2px,#d3d3d3 7px,#ebebeb 12px,#ffffff 19px)"></div>
<div style="position:absolute;left:310px;top:435px;width:19px;height:209px;background:linear-gradient(to right,#e6d6d6 0px,#f7eeee 2px,#d8c2c2 7px,#efd7d7 12px,#fde3e3 19px)"></div>
<svg style="position:absolute;left:310px;top:112px" width="19" height="578" viewBox="0 0 19 578"><g fill="#000" shape-rendering="crispEdges"><rect x="15" y="43" width="4" height="1" fill="#000"/><rect x="15" y="36" width="4" height="1" fill="#000"/><rect x="15" y="28" width="4" height="1" fill="#000"/><rect x="15" y="21" width="4" height="1" fill="#000"/><rect x="11" y="50" width="8" height="1" fill="#000"/><rect x="1" y="52" width="1" height="1"/><rect x="1" y="51" width="1" height="1"/><rect x="1" y="50" width="1" height="1"/><rect x="1" y="49" width="1" height="1"/><rect x="2" y="53" width="1" height="1"/><rect x="2" y="48" width="1" height="1"/><rect x="3" y="53" width="1" height="1"/><rect x="3" y="48" width="1" height="1"/><rect x="4" y="53" width="1" height="1"/><rect x="4" y="48" width="1" height="1"/><rect x="5" y="53" width="1" height="1"/><rect x="5" y="48" width="1" height="1"/><rect x="6" y="53" width="1" height="1"/><rect x="6" y="48" width="1" height="1"/><rect x="7" y="53" width="1" height="1"/><rect x="7" y="48" width="1" height="1"/><rect x="8" y="53" width="1" height="1"/><rect x="8" y="48" width="1" height="1"/><rect x="9" y="52" width="1" height="1"/><rect x="9" y="51" width="1" height="1"/><rect x="9" y="50" width="1" height="1"/><rect x="9" y="49" width="1" height="1"/><rect x="15" y="57" width="4" height="1" fill="#000"/><rect x="15" y="64" width="4" height="1" fill="#000"/><rect x="15" y="72" width="4" height="1" fill="#000"/><rect x="15" y="79" width="4" height="1" fill="#000"/><rect x="13" y="86" width="6" height="1" fill="#000"/><rect x="15" y="93" width="4" height="1" fill="#000"/><rect x="15" y="100" width="4" height="1" fill="#000"/><rect x="15" y="108" width="4" height="1" fill="#000"/><rect x="15" y="115" width="4" height="1" fill="#000"/><rect x="11" y="122" width="8" height="1" fill="#000"/><rect x="11" y="129" width="8" height="1" fill="#000"/><rect x="1" y="131" width="1" height="1"/><rect x="1" y="130" width="1" height="1"/><rect x="1" y="129" width="1" height="1"/><rect x="1" y="128" width="1" height="1"/><rect x="2" y="132" width="1" height="1"/><rect x="2" y="127" width="1" height="1"/><rect x="3" y="132" width="1" height="1"/><rect x="3" y="127" width="1" height="1"/><rect x="4" y="132" width="1" height="1"/><rect x="4" y="127" width="1" height="1"/><rect x="5" y="132" width="1" height="1"/><rect x="5" y="127" width="1" height="1"/><rect x="6" y="132" width="1" height="1"/><rect x="6" y="127" width="1" height="1"/><rect x="7" y="132" width="1" height="1"/><rect x="7" y="127" width="1" height="1"/><rect x="8" y="132" width="1" height="1"/><rect x="8" y="127" width="1" height="1"/><rect x="9" y="131" width="1" height="1"/><rect x="9" y="130" width="1" height="1"/><rect x="9" y="129" width="1" height="1"/><rect x="9" y="128" width="1" height="1"/><rect x="15" y="136" width="4" height="1" fill="#000"/><rect x="15" y="143" width="4" height="1" fill="#000"/><rect x="15" y="151" width="4" height="1" fill="#000"/><rect x="15" y="158" width="4" height="1" fill="#000"/><rect x="11" y="164" width="8" height="1" fill="#000"/><rect x="1" y="166" width="1" height="1"/><rect x="1" y="165" width="1" height="1"/><rect x="1" y="164" width="1" height="1"/><rect x="1" y="163" width="1" height="1"/><rect x="2" y="167" width="1" height="1"/><rect x="2" y="162" width="1" height="1"/><rect x="3" y="167" width="1" height="1"/><rect x="3" y="162" width="1" height="1"/><rect x="4" y="167" width="1" height="1"/><rect x="4" y="162" width="1" height="1"/><rect x="5" y="167" width="1" height="1"/><rect x="5" y="162" width="1" height="1"/><rect x="6" y="167" width="1" height="1"/><rect x="6" y="162" width="1" height="1"/><rect x="7" y="167" width="1" height="1"/><rect x="7" y="162" width="1" height="1"/><rect x="8" y="167" width="1" height="1"/><rect x="8" y="162" width="1" height="1"/><rect x="9" y="166" width="1" height="1"/><rect x="9" y="165" width="1" height="1"/><rect x="9" y="164" width="1" height="1"/><rect x="9" y="163" width="1" height="1"/><rect x="15" y="171" width="4" height="1" fill="#000"/><rect x="15" y="178" width="4" height="1" fill="#000"/><rect x="11" y="184" width="8" height="1" fill="#000"/><rect x="1" y="186" width="1" height="1"/><rect x="1" y="185" width="1" height="1"/><rect x="1" y="184" width="1" height="1"/><rect x="1" y="183" width="1" height="1"/><rect x="2" y="187" width="1" height="1"/><rect x="2" y="182" width="1" height="1"/><rect x="3" y="187" width="1" height="1"/><rect x="3" y="182" width="1" height="1"/><rect x="4" y="187" width="1" height="1"/><rect x="4" y="182" width="1" height="1"/><rect x="5" y="187" width="1" height="1"/><rect x="5" y="182" width="1" height="1"/><rect x="6" y="187" width="1" height="1"/><rect x="6" y="182" width="1" height="1"/><rect x="7" y="187" width="1" height="1"/><rect x="7" y="182" width="1" height="1"/><rect x="8" y="187" width="1" height="1"/><rect x="8" y="182" width="1" height="1"/><rect x="9" y="186" width="1" height="1"/><rect x="9" y="185" width="1" height="1"/><rect x="9" y="184" width="1" height="1"/><rect x="9" y="183" width="1" height="1"/><rect x="15" y="191" width="4" height="1" fill="#000"/><rect x="15" y="198" width="4" height="1" fill="#000"/><rect x="15" y="206" width="4" height="1" fill="#000"/><rect x="15" y="213" width="4" height="1" fill="#000"/><rect x="13" y="220" width="6" height="1" fill="#000"/><rect x="15" y="227" width="4" height="1" fill="#000"/><rect x="11" y="234" width="8" height="1" fill="#000"/><rect x="1" y="236" width="1" height="1"/><rect x="1" y="235" width="1" height="1"/><rect x="1" y="234" width="1" height="1"/><rect x="1" y="233" width="1" height="1"/><rect x="2" y="237" width="1" height="1"/><rect x="2" y="232" width="1" height="1"/><rect x="3" y="237" width="1" height="1"/><rect x="3" y="232" width="1" height="1"/><rect x="4" y="237" width="1" height="1"/><rect x="4" y="232" width="1" height="1"/><rect x="5" y="237" width="1" height="1"/><rect x="5" y="232" width="1" height="1"/><rect x="6" y="237" width="1" height="1"/><rect x="6" y="232" width="1" height="1"/><rect x="7" y="237" width="1" height="1"/><rect x="7" y="232" width="1" height="1"/><rect x="8" y="237" width="1" height="1"/><rect x="8" y="232" width="1" height="1"/><rect x="9" y="236" width="1" height="1"/><rect x="9" y="235" width="1" height="1"/><rect x="9" y="234" width="1" height="1"/><rect x="9" y="233" width="1" height="1"/><rect x="15" y="241" width="4" height="1" fill="#000"/><rect x="15" y="248" width="4" height="1" fill="#000"/><rect x="11" y="254" width="8" height="1" fill="#000"/><rect x="1" y="256" width="1" height="1"/><rect x="1" y="255" width="1" height="1"/><rect x="1" y="254" width="1" height="1"/><rect x="1" y="253" width="1" height="1"/><rect x="2" y="257" width="1" height="1"/><rect x="2" y="252" width="1" height="1"/><rect x="3" y="257" width="1" height="1"/><rect x="3" y="252" width="1" height="1"/><rect x="4" y="257" width="1" height="1"/><rect x="4" y="252" width="1" height="1"/><rect x="5" y="257" width="1" height="1"/><rect x="5" y="252" width="1" height="1"/><rect x="6" y="257" width="1" height="1"/><rect x="6" y="252" width="1" height="1"/><rect x="7" y="257" width="1" height="1"/><rect x="7" y="252" width="1" height="1"/><rect x="8" y="257" width="1" height="1"/><rect x="8" y="252" width="1" height="1"/><rect x="9" y="256" width="1" height="1"/><rect x="9" y="255" width="1" height="1"/><rect x="9" y="254" width="1" height="1"/><rect x="9" y="253" width="1" height="1"/><rect x="15" y="261" width="4" height="1" fill="#000"/><rect x="15" y="268" width="4" height="1" fill="#000"/><rect x="15" y="276" width="4" height="1" fill="#000"/><rect x="15" y="283" width="4" height="1" fill="#000"/><rect x="13" y="290" width="6" height="1" fill="#000"/><rect x="15" y="297" width="4" height="1" fill="#000"/><rect x="11" y="304" width="8" height="1" fill="#000"/><rect x="1" y="306" width="1" height="1"/><rect x="1" y="305" width="1" height="1"/><rect x="1" y="304" width="1" height="1"/><rect x="1" y="303" width="1" height="1"/><rect x="2" y="307" width="1" height="1"/><rect x="2" y="302" width="1" height="1"/><rect x="3" y="307" width="1" height="1"/><rect x="3" y="302" width="1" height="1"/><rect x="4" y="307" width="1" height="1"/><rect x="4" y="302" width="1" height="1"/><rect x="5" y="307" width="1" height="1"/><rect x="5" y="302" width="1" height="1"/><rect x="6" y="307" width="1" height="1"/><rect x="6" y="302" width="1" height="1"/><rect x="7" y="307" width="1" height="1"/><rect x="7" y="302" width="1" height="1"/><rect x="8" y="307" width="1" height="1"/><rect x="8" y="302" width="1" height="1"/><rect x="9" y="306" width="1" height="1"/><rect x="9" y="305" width="1" height="1"/><rect x="9" y="304" width="1" height="1"/><rect x="9" y="303" width="1" height="1"/><rect x="15" y="311" width="4" height="1" fill="#000"/><rect x="15" y="318" width="4" height="1" fill="#000"/><rect x="11" y="323" width="8" height="1" fill="#000"/><rect x="1" y="325" width="1" height="1"/><rect x="1" y="324" width="1" height="1"/><rect x="1" y="323" width="1" height="1"/><rect x="1" y="322" width="1" height="1"/><rect x="2" y="326" width="1" height="1"/><rect x="2" y="321" width="1" height="1"/><rect x="3" y="326" width="1" height="1"/><rect x="3" y="321" width="1" height="1"/><rect x="4" y="326" width="1" height="1"/><rect x="4" y="321" width="1" height="1"/><rect x="5" y="326" width="1" height="1"/><rect x="5" y="321" width="1" height="1"/><rect x="6" y="326" width="1" height="1"/><rect x="6" y="321" width="1" height="1"/><rect x="7" y="326" width="1" height="1"/><rect x="7" y="321" width="1" height="1"/><rect x="8" y="326" width="1" height="1"/><rect x="8" y="321" width="1" height="1"/><rect x="9" y="325" width="1" height="1"/><rect x="9" y="324" width="1" height="1"/><rect x="9" y="323" width="1" height="1"/><rect x="9" y="322" width="1" height="1"/><rect x="15" y="330" width="4" height="1" fill="#000"/><rect x="15" y="337" width="4" height="1" fill="#000"/><rect x="15" y="345" width="4" height="1" fill="#000"/><rect x="15" y="352" width="4" height="1" fill="#000"/><rect x="13" y="359" width="6" height="1" fill="#000"/><rect x="15" y="366" width="4" height="1" fill="#000"/><rect x="15" y="373" width="4" height="1" fill="#000"/><rect x="15" y="381" width="4" height="1" fill="#000"/><rect x="15" y="388" width="4" height="1" fill="#000"/><rect x="11" y="395" width="8" height="1" fill="#000"/><rect x="1" y="395" width="1" height="1"/><rect x="2" y="396" width="1" height="1"/><rect x="2" y="395" width="1" height="1"/><rect x="3" y="395" width="1" height="1"/><rect x="4" y="395" width="1" height="1"/><rect x="5" y="395" width="1" height="1"/><rect x="6" y="395" width="1" height="1"/><rect x="7" y="395" width="1" height="1"/><rect x="8" y="395" width="1" height="1"/><rect x="9" y="397" width="1" height="1"/><rect x="9" y="396" width="1" height="1"/><rect x="9" y="395" width="1" height="1"/><rect x="9" y="394" width="1" height="1"/><rect x="9" y="393" width="1" height="1"/><rect x="15" y="402" width="4" height="1" fill="#000"/><rect x="15" y="409" width="4" height="1" fill="#000"/><rect x="15" y="417" width="4" height="1" fill="#000"/><rect x="15" y="424" width="4" height="1" fill="#000"/><rect x="13" y="431" width="6" height="1" fill="#000"/><rect x="15" y="438" width="4" height="1" fill="#000"/><rect x="15" y="445" width="4" height="1" fill="#000"/><rect x="15" y="453" width="4" height="1" fill="#000"/><rect x="15" y="460" width="4" height="1" fill="#000"/><rect x="11" y="467" width="8" height="1" fill="#000"/><rect x="1" y="469" width="1" height="1"/><rect x="1" y="468" width="1" height="1"/><rect x="1" y="467" width="1" height="1"/><rect x="1" y="466" width="1" height="1"/><rect x="2" y="470" width="1" height="1"/><rect x="2" y="465" width="1" height="1"/><rect x="3" y="465" width="1" height="1"/><rect x="4" y="465" width="1" height="1"/><rect x="5" y="466" width="1" height="1"/><rect x="6" y="468" width="1" height="1"/><rect x="6" y="467" width="1" height="1"/><rect x="7" y="469" width="1" height="1"/><rect x="8" y="470" width="1" height="1"/><rect x="9" y="470" width="1" height="1"/><rect x="9" y="469" width="1" height="1"/><rect x="9" y="468" width="1" height="1"/><rect x="9" y="467" width="1" height="1"/><rect x="9" y="466" width="1" height="1"/><rect x="9" y="465" width="1" height="1"/><rect x="15" y="474" width="4" height="1" fill="#000"/><rect x="15" y="481" width="4" height="1" fill="#000"/><rect x="15" y="489" width="4" height="1" fill="#000"/><rect x="15" y="496" width="4" height="1" fill="#000"/><rect x="13" y="503" width="6" height="1" fill="#000"/><rect x="15" y="510" width="4" height="1" fill="#000"/><rect x="15" y="517" width="4" height="1" fill="#000"/><rect x="15" y="525" width="4" height="1" fill="#000"/><rect x="15" y="532" width="4" height="1" fill="#000"/><rect x="11" y="532" width="8" height="1" fill="#000"/><rect x="1" y="534" width="1" height="1"/><rect x="1" y="533" width="1" height="1"/><rect x="1" y="532" width="1" height="1"/><rect x="1" y="531" width="1" height="1"/><rect x="2" y="535" width="1" height="1"/><rect x="2" y="530" width="1" height="1"/><rect x="3" y="535" width="1" height="1"/><rect x="3" y="530" width="1" height="1"/><rect x="4" y="535" width="1" height="1"/><rect x="4" y="530" width="1" height="1"/><rect x="5" y="535" width="1" height="1"/><rect x="5" y="530" width="1" height="1"/><rect x="6" y="535" width="1" height="1"/><rect x="6" y="530" width="1" height="1"/><rect x="7" y="535" width="1" height="1"/><rect x="7" y="530" width="1" height="1"/><rect x="8" y="535" width="1" height="1"/><rect x="8" y="530" width="1" height="1"/><rect x="9" y="534" width="1" height="1"/><rect x="9" y="533" width="1" height="1"/><rect x="9" y="532" width="1" height="1"/><rect x="9" y="531" width="1" height="1"/><rect x="15" y="539" width="4" height="1" fill="#000"/><rect x="15" y="546" width="4" height="1" fill="#000"/><rect x="15" y="554" width="4" height="1" fill="#000"/><rect x="15" y="561" width="4" height="1" fill="#000"/><rect x="13" y="568" width="6" height="1" fill="#000"/><rect x="15" y="575" width="4" height="1" fill="#000"/></g></svg>
<div style="position:absolute;left:310px;top:662px;width:19px;height:1px;background:#22b8c8;opacity:0.8"></div>
<div style="position:absolute;left:330px;top:132px;width:617px;height:558px;background:#f0f0f0"></div>
<div style="position:absolute;left:340px;top:142px;width:595px;height:522px;background:#fff;border-radius:0.5px;box-shadow:0 0 0.6px 1px rgba(0,0,0,0.032),0 0 0.6px 2px rgba(0,0,0,0.032),0 0 0.6px 3px rgba(0,0,0,0.032),0 0 0.6px 4px rgba(0,0,0,0.032),0 0 0.6px 5px rgba(0,0,0,0.032),0 0 0.6px 6px rgba(0,0,0,0.032),0 0 0.6px 7px rgba(0,0,0,0.032),0 0 0.6px 8px rgba(0,0,0,0.032)"></div>
<div style="position:absolute;left:340px;top:162px;width:595px;height:1px;background:#acacff"></div>
<div style="position:absolute;left:340px;top:241px;width:595px;height:1px;background:#acacff"></div>
<div style="position:absolute;left:340px;top:276px;width:595px;height:1px;background:#acacff"></div>
<div style="position:absolute;left:340px;top:296px;width:595px;height:1px;background:#acacff"></div>
<div style="position:absolute;left:340px;top:346px;width:595px;height:1px;background:#acacff"></div>
<div style="position:absolute;left:340px;top:366px;width:595px;height:1px;background:#acacff"></div>
<div style="position:absolute;left:340px;top:416px;width:595px;height:1px;background:#acacff"></div>
<div style="position:absolute;left:340px;top:435px;width:595px;height:1px;background:#acacff"></div>
<div style="position:absolute;left:340px;top:644px;width:595px;height:1px;background:#acacff"></div>
<div style="position:absolute;left:360px;top:142px;width:1px;height:522px;background:#acacff"></div>
<div style="position:absolute;left:915px;top:142px;width:1px;height:522px;background:#acacff"></div>
<div style="position:absolute;left:337.5px;width:600px;text-align:center;top:188px;font:normal 20px/22px 'Liberation Sans',sans-serif;color:#dedede;white-space:nowrap;letter-spacing:-0.15px">Title</div>
<div style="position:absolute;left:337.5px;width:600px;text-align:center;top:245px;font:normal 20px/22px 'Liberation Sans',sans-serif;color:#dedede;white-space:nowrap;letter-spacing:-0.15px">Page Header</div>
<div style="position:absolute;left:337.5px;width:600px;text-align:center;top:272px;font:normal 20px/22px 'Liberation Sans',sans-serif;color:#dedede;white-space:nowrap;letter-spacing:-0.15px">Column Header</div>
<div style="position:absolute;left:337.5px;width:600px;text-align:center;top:307px;font:normal 20px/22px 'Liberation Sans',sans-serif;color:#dedede;white-space:nowrap;letter-spacing:-0.15px">Status Group Header 1</div>
<div style="position:absolute;left:337.5px;width:600px;text-align:center;top:342px;font:normal 20px/22px 'Liberation Sans',sans-serif;color:#dedede;white-space:nowrap;letter-spacing:-0.15px">Detail 1</div>
<div style="position:absolute;left:337.5px;width:600px;text-align:center;top:377px;font:normal 20px/22px 'Liberation Sans',sans-serif;color:#dedede;white-space:nowrap;letter-spacing:-0.15px">Status Group Footer 1</div>
<div style="position:absolute;left:337.5px;width:600px;text-align:center;top:412px;font:normal 20px/22px 'Liberation Sans',sans-serif;color:#dedede;white-space:nowrap;letter-spacing:-0.15px">Page Footer</div>
<div style="position:absolute;left:337.5px;width:600px;text-align:center;top:526px;font:normal 20px/22px 'Liberation Sans',sans-serif;color:#dedede;white-space:nowrap;letter-spacing:-0.15px">Summary</div>
<div style="position:absolute;left:545px;top:277px;width:1px;height:19px;background:#d6d6d6"></div>
<div style="position:absolute;left:730px;top:277px;width:1px;height:19px;background:#d6d6d6"></div>
<div style="position:absolute;left:360px;top:295px;width:555px;height:1px;background:#d6d6d6"></div>
<div style="position:absolute;left:545px;top:347px;width:1px;height:19px;background:#d6d6d6"></div>
<div style="position:absolute;left:730px;top:347px;width:1px;height:19px;background:#d6d6d6"></div>
<div style="position:absolute;left:360px;top:365px;width:555px;height:1px;background:#e2e2e2"></div>
<div style="position:absolute;left:914px;top:277px;width:1px;height:19px;background:#d6d6d6"></div>
<div style="position:absolute;left:914px;top:347px;width:1px;height:19px;background:#d6d6d6"></div>
<div style="position:absolute;left:360.5px;top:277px;font:normal 10px/11px 'Liberation Sans',sans-serif;color:#000;white-space:nowrap;-webkit-text-stroke:0.2px #000;letter-spacing:0.25px">Area Size</div>
<div style="position:absolute;left:545.5px;top:277px;font:normal 10px/11px 'Liberation Sans',sans-serif;color:#000;white-space:nowrap;-webkit-text-stroke:0.2px #000;letter-spacing:0.38px">Land Classification</div>
<div style="position:absolute;left:730.5px;top:277px;font:normal 10px/11px 'Liberation Sans',sans-serif;color:#000;white-space:nowrap;-webkit-text-stroke:0.2px #000;letter-spacing:0px">Status</div>
<div style="position:absolute;left:360px;top:347px;font:normal 10px/11px 'Liberation Sans',sans-serif;color:#000;white-space:nowrap;-webkit-text-stroke:0.2px #000;letter-spacing:0.23px">$F{areaSize}</div>
<div style="position:absolute;left:545px;top:347px;font:normal 10px/11px 'Liberation Sans',sans-serif;color:#000;white-space:nowrap;-webkit-text-stroke:0.2px #000;letter-spacing:0.36px">$F{maAreaType}</div>
<div style="position:absolute;left:730px;top:347px;font:normal 10px/11px 'Liberation Sans',sans-serif;color:#000;white-space:nowrap;-webkit-text-stroke:0.2px #000;letter-spacing:-0.05px">$F{status}</div>
<svg style="position:absolute;left:340px;top:460px" width="595" height="200" viewBox="0 0 595 200"><defs><pattern id="dash" x="0" y="0" width="4" height="1" patternUnits="userSpaceOnUse"><rect x="0" y="0" width="2" height="1" fill="#dcdcdc"/></pattern><pattern id="dash2" x="0" y="0" width="4" height="1" patternUnits="userSpaceOnUse"><rect x="0" y="0" width="4" height="1" fill="#6a6a6a"/><rect x="0" y="0" width="3" height="1" fill="#333"/></pattern></defs><g shape-rendering="crispEdges"><rect x="50" y="100" width="506" height="1" fill="url(#dash)"/><rect x="50" y="64" width="506" height="1" fill="url(#dash)"/><rect x="50" y="28" width="506" height="1" fill="url(#dash)"/><rect x="49" y="136" width="507" height="1" fill="url(#dash2)"/><rect x="74" y="122" width="11" height="15" fill="#ff5555"/><rect x="91" y="64" width="11" height="73" fill="#5555ff"/><rect x="108" y="79" width="11" height="58" fill="#55ff55"/><rect x="133" y="79" width="11" height="58" fill="#ff5555"/><rect x="150" y="35" width="11" height="102" fill="#5555ff"/><rect x="167" y="93" width="11" height="44" fill="#55ff55"/><rect x="192" y="93" width="11" height="44" fill="#ff5555"/><rect x="209" y="50" width="11" height="87" fill="#5555ff"/><rect x="225" y="107" width="11" height="30" fill="#55ff55"/><rect x="250" y="64" width="11" height="73" fill="#ff5555"/><rect x="267" y="21" width="11" height="116" fill="#5555ff"/><rect x="284" y="93" width="11" height="44" fill="#55ff55"/><rect x="309" y="64" width="11" height="73" fill="#ff5555"/><rect x="326" y="79" width="11" height="58" fill="#5555ff"/><rect x="343" y="50" width="11" height="87" fill="#55ff55"/><rect x="368" y="35" width="11" height="102" fill="#ff5555"/><rect x="385" y="79" width="11" height="58" fill="#5555ff"/><rect x="402" y="93" width="11" height="44" fill="#55ff55"/><rect x="427" y="35" width="11" height="102" fill="#ff5555"/><rect x="443" y="107" width="11" height="30" fill="#5555ff"/><rect x="460" y="79" width="11" height="58" fill="#55ff55"/><rect x="485" y="21" width="11" height="116" fill="#ff5555"/><rect x="502" y="122" width="11" height="15" fill="#5555ff"/><rect x="519" y="93" width="11" height="44" fill="#55ff55"/><rect x="49" y="15" width="1" height="122" fill="#000"/><rect x="47" y="136" width="2" height="1" fill="#000"/><rect x="47" y="100" width="2" height="1" fill="#000"/><rect x="47" y="64" width="2" height="1" fill="#000"/><rect x="47" y="28" width="2" height="1" fill="#000"/></g></svg>
<div style="position:absolute;right:564px;top:592px;font:normal 10px/11px 'Liberation Sans',sans-serif;color:#000;white-space:nowrap;letter-spacing:0.3px;-webkit-text-stroke:0.1px #000">0.0</div>
<div style="position:absolute;right:564px;top:555px;font:normal 10px/11px 'Liberation Sans',sans-serif;color:#000;white-space:nowrap;letter-spacing:0.3px;-webkit-text-stroke:0.1px #000">2.5</div>
<div style="position:absolute;right:564px;top:519px;font:normal 10px/11px 'Liberation Sans',sans-serif;color:#000;white-space:nowrap;letter-spacing:0.3px;-webkit-text-stroke:0.1px #000">5.0</div>
<div style="position:absolute;right:564px;top:483px;font:normal 10px/11px 'Liberation Sans',sans-serif;color:#000;white-space:nowrap;letter-spacing:0.3px;-webkit-text-stroke:0.1px #000">7.5</div>
<div style="position:absolute;left:136.45px;width:600px;text-align:center;top:602px;font:normal 10px/11px 'Liberation Sans',sans-serif;color:#000;white-space:nowrap;letter-spacing:0px;-webkit-text-stroke:0.2px #000">One</div>
<div style="position:absolute;left:195.19px;width:600px;text-align:center;top:602px;font:normal 10px/11px 'Liberation Sans',sans-serif;color:#000;white-space:nowrap;letter-spacing:0px;-webkit-text-stroke:0.2px #000">Two</div>
<div style="position:absolute;left:253.92999999999995px;width:600px;text-align:center;top:602px;font:normal 10px/11px 'Liberation Sans',sans-serif;color:#000;white-space:nowrap;letter-spacing:0px;-webkit-text-stroke:0.2px #000">Three</div>
<div style="position:absolute;left:312.66999999999996px;width:600px;text-align:center;top:602px;font:normal 10px/11px 'Liberation Sans',sans-serif;color:#000;white-space:nowrap;letter-spacing:0px;-webkit-text-stroke:0.2px #000">Four</div>
<div style="position:absolute;left:371.40999999999997px;width:600px;text-align:center;top:602px;font:normal 10px/11px 'Liberation Sans',sans-serif;color:#000;white-space:nowrap;letter-spacing:0px;-webkit-text-stroke:0.2px #000">Five</div>
<div style="position:absolute;left:430.15px;width:600px;text-align:center;top:602px;font:normal 10px/11px 'Liberation Sans',sans-serif;color:#000;white-space:nowrap;letter-spacing:0px;-webkit-text-stroke:0.2px #000">Six</div>
<div style="position:absolute;left:488.89px;width:600px;text-align:center;top:602px;font:normal 10px/11px 'Liberation Sans',sans-serif;color:#000;white-space:nowrap;letter-spacing:0px;-webkit-text-stroke:0.2px #000">Seven</div>
<div style="position:absolute;left:547.63px;width:600px;text-align:center;top:602px;font:normal 10px/11px 'Liberation Sans',sans-serif;color:#000;white-space:nowrap;letter-spacing:0px;-webkit-text-stroke:0.2px #000">Eight</div>
<div style="position:absolute;left:567px;top:622px;width:137px;height:21px;box-sizing:border-box;border:1px solid #000;background:#fff"></div>
<div style="position:absolute;left:570px;top:629px;width:8px;height:8px;background:#ff5555"></div>
<div style="position:absolute;left:583.5px;top:627px;font:normal 10px/11px 'Liberation Sans',sans-serif;color:#000;white-space:nowrap;letter-spacing:-0.1px;-webkit-text-stroke:0.2px #000">First</div>
<div style="position:absolute;left:607px;top:629px;width:8px;height:8px;background:#5555ff"></div>
<div style="position:absolute;left:620.5px;top:627px;font:normal 10px/11px 'Liberation Sans',sans-serif;color:#000;white-space:nowrap;letter-spacing:0.45px;-webkit-text-stroke:0.2px #000">Second</div>
<div style="position:absolute;left:662px;top:629px;width:8px;height:8px;background:#55ff55"></div>
<div style="position:absolute;left:676px;top:627px;font:normal 10px/11px 'Liberation Sans',sans-serif;color:#000;white-space:nowrap;letter-spacing:0.35px;-webkit-text-stroke:0.2px #000">Third</div>
<div style="position:absolute;left:365px;top:469px;width:540px;height:177px;box-sizing:border-box;border:2px solid #fbbd42"></div>
<div style="position:absolute;left:362px;top:466px;width:5px;height:5px;box-sizing:border-box;border:1px solid #1e4a78;background:linear-gradient(135deg,#d2e4f6,#5a8cc0)"></div>
<div style="position:absolute;left:362px;top:554px;width:5px;height:5px;box-sizing:border-box;border:1px solid #1e4a78;background:linear-gradient(135deg,#d2e4f6,#5a8cc0)"></div>
<div style="position:absolute;left:362px;top:644px;width:5px;height:5px;box-sizing:border-box;border:1px solid #1e4a78;background:linear-gradient(135deg,#d2e4f6,#5a8cc0)"></div>
<div style="position:absolute;left:633px;top:466px;width:5px;height:5px;box-sizing:border-box;border:1px solid #1e4a78;background:linear-gradient(135deg,#d2e4f6,#5a8cc0)"></div>
<div style="position:absolute;left:633px;top:644px;width:5px;height:5px;box-sizing:border-box;border:1px solid #1e4a78;background:linear-gradient(135deg,#d2e4f6,#5a8cc0)"></div>
<div style="position:absolute;left:903px;top:466px;width:5px;height:5px;box-sizing:border-box;border:1px solid #1e4a78;background:linear-gradient(135deg,#d2e4f6,#5a8cc0)"></div>
<div style="position:absolute;left:903px;top:554px;width:5px;height:5px;box-sizing:border-box;border:1px solid #1e4a78;background:linear-gradient(135deg,#d2e4f6,#5a8cc0)"></div>
<div style="position:absolute;left:903px;top:644px;width:5px;height:5px;box-sizing:border-box;border:1px solid #1e4a78;background:linear-gradient(135deg,#d2e4f6,#5a8cc0)"></div></body></html>
